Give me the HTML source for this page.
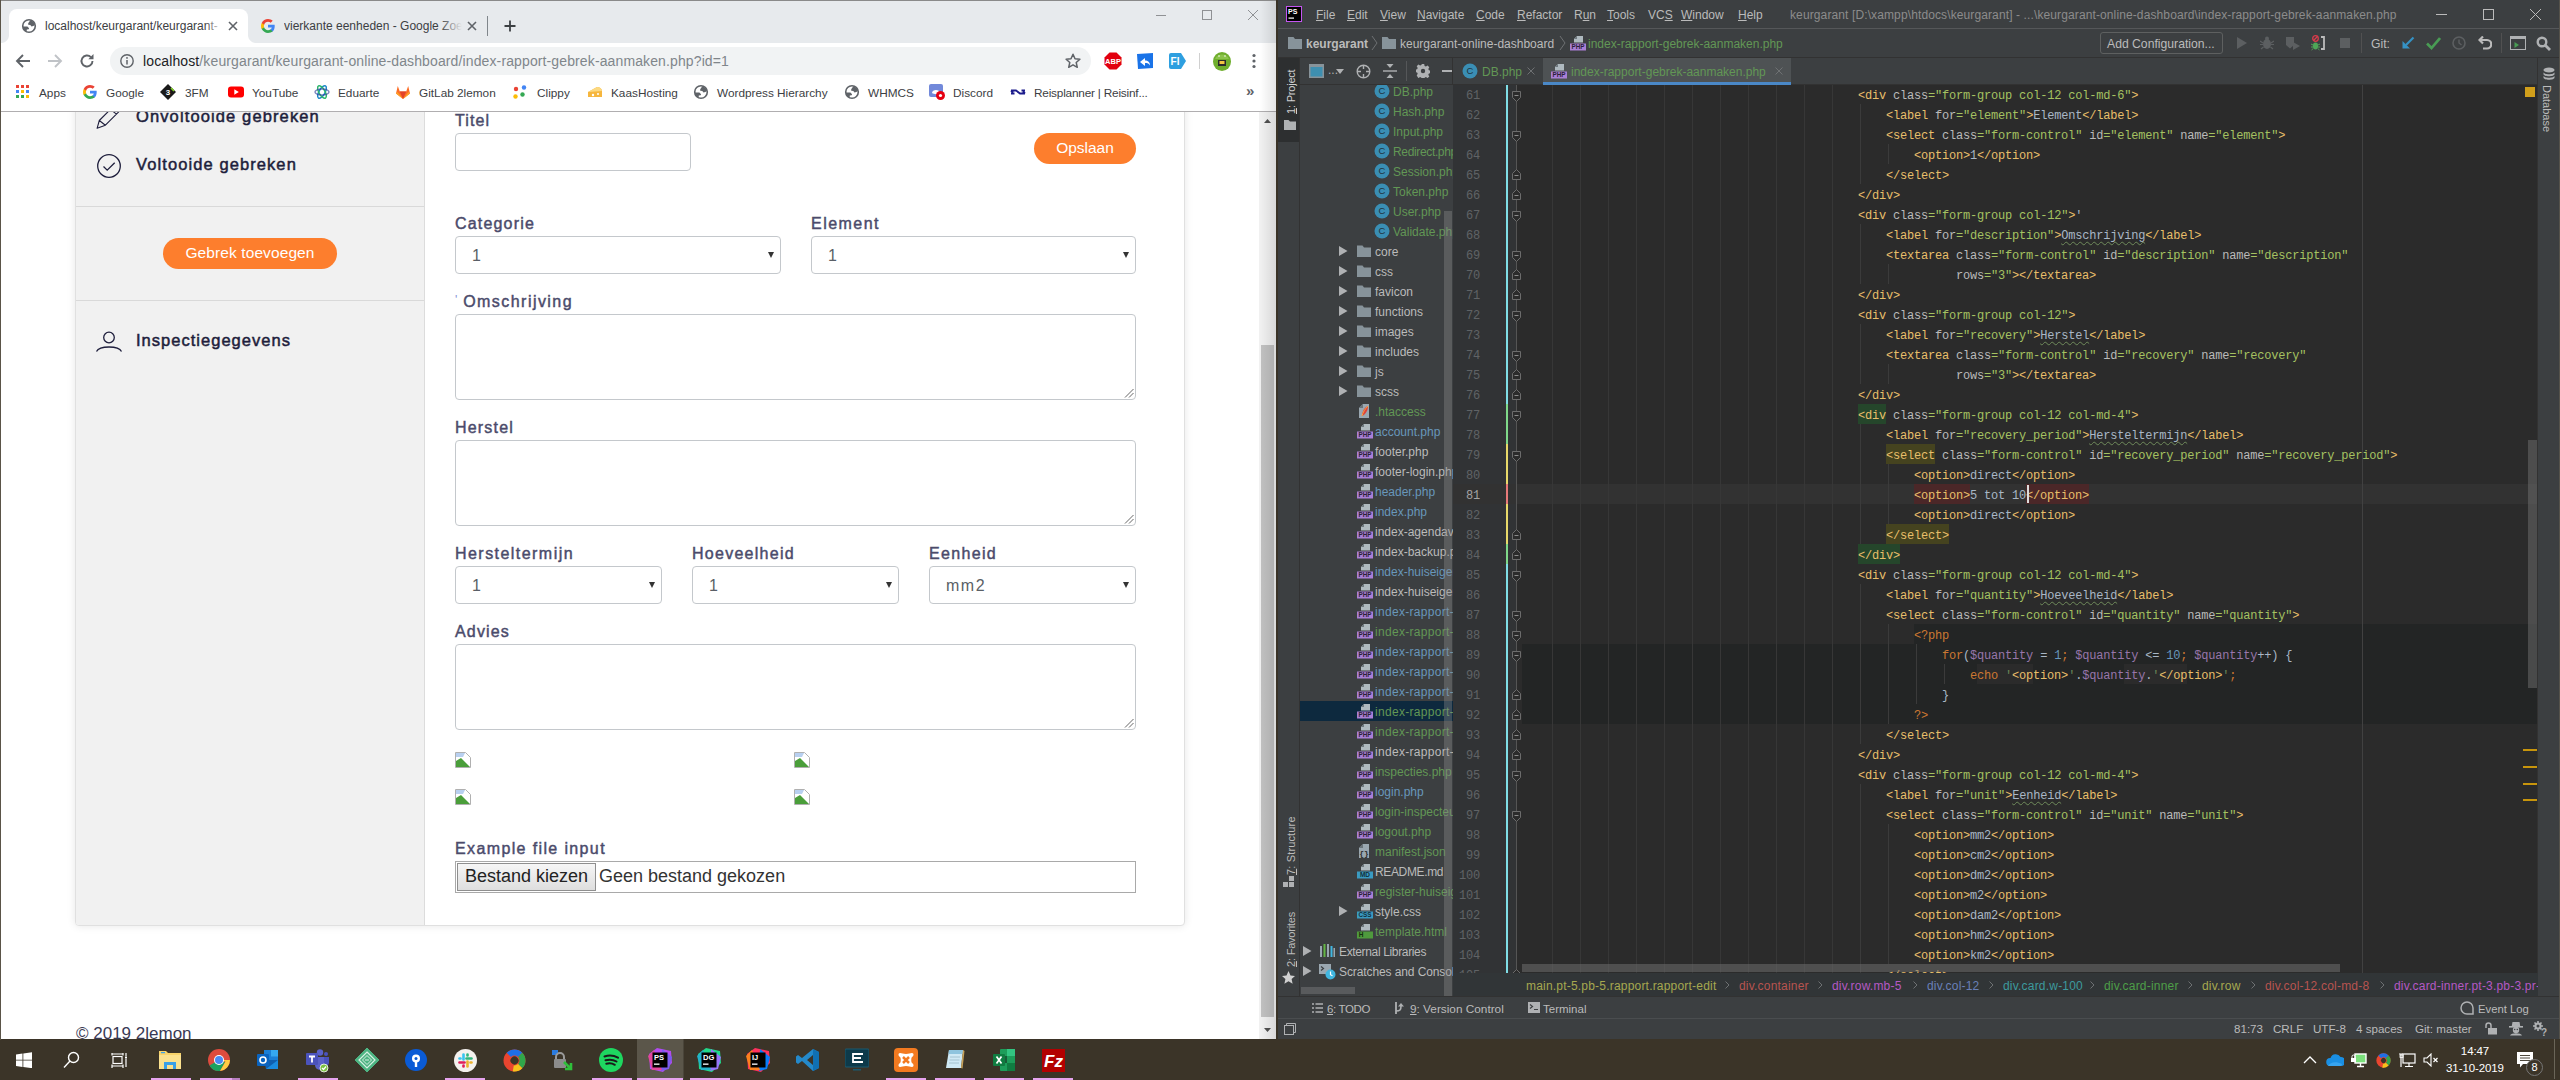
<!DOCTYPE html>
<html lang="nl">
<head>
<meta charset="utf-8">
<title>Desktop</title>
<style>
*{box-sizing:border-box;margin:0;padding:0}
html,body{width:2560px;height:1080px;overflow:hidden;background:#3a3327;font-family:"Liberation Sans",sans-serif}
.abs{position:absolute}
#chrome{position:absolute;left:0;top:0;width:1276px;height:1040px;background:#fff;overflow:hidden}
#chrome .topline{z-index:6;position:absolute;left:0;top:0;width:1277px;height:1px;background:#8a8a8a}
#chrome .leftline{z-index:6;position:absolute;left:0;top:0;width:1px;height:1040px;background:#5a5448}
#tabstrip{position:absolute;left:0;top:1px;width:1277px;height:42px;background:#e7eaed}
.tab-active{position:absolute;left:9px;top:8px;width:239px;height:34px;background:#fff;border-radius:8px 8px 0 0}
.tabtxt{position:absolute;font-size:12px;color:#3c4043;white-space:nowrap;overflow:hidden;line-height:16px}
#toolbar{position:absolute;left:0;top:43px;width:1277px;height:35px;background:#fff}
#omni{position:absolute;left:110px;top:4px;width:981px;height:28px;border-radius:14px;background:#f1f3f4}
#bookmarks{position:absolute;left:0;top:78px;width:1277px;height:34px;background:#fff;border-bottom:1px solid #b0aeb0;z-index:3}
.bm{position:absolute;top:7px;font-size:11.800px;color:#3c4043;white-space:nowrap;line-height:16px}
.bmi{position:absolute;top:6px;width:16px;height:16px}
#page{position:absolute;left:1px;top:111px;width:1258px;height:929px;background:#fff;overflow:hidden;font-family:"Liberation Sans",sans-serif}
#vscroll{position:absolute;left:1259px;top:111px;width:17px;height:929px;background:#f1f1f1}
#vscroll .thumb{position:absolute;left:2px;top:234px;width:13px;height:672px;background:#c1c1c1}
#card{position:absolute;left:74px;top:-21px;width:1110px;height:836px;background:#fff;border:1px solid #e0e0e0;box-shadow:0 0 9px rgba(0,0,0,.10);border-radius:4px}
#side{position:absolute;left:0;top:0;width:349px;height:834px;background:#f1f1f1;border-right:1px solid #dcdcdc;border-radius:0 0 0 3px}
.sideitem{position:absolute;left:60px;font-size:16.5px;color:#1e1e3c;white-space:nowrap;letter-spacing:0;-webkit-text-stroke:.5px #1e1e3c;line-height:18px}
.hr{position:absolute;left:0;width:348px;height:1px;background:#d9d9d9}
.btn{position:absolute;background:#fd7e2d;color:#fff;border-radius:16px;text-align:center;font-size:15px;white-space:nowrap}
.lbl{position:absolute;margin-top:1px;font-size:16px;color:#4b4b6b;white-space:nowrap;letter-spacing:0;line-height:18px;-webkit-text-stroke:.45px #4b4b6b}
.fc{position:absolute;border:1px solid #c4c8cc;border-radius:4px;background:#fff;height:38px}
.fc .v{position:absolute;left:16px;top:10px;font-size:16px;color:#5a5f66;line-height:18px;letter-spacing:1.500px}
.fc .arr{position:absolute;right:6px;top:15px;width:0;height:0;border-left:3.5px solid transparent;border-right:3.5px solid transparent;border-top:6px solid #333}
.ta .grip{position:absolute;right:1px;bottom:1px;width:10px;height:10px}
</style>
</head>
<body>
<div id="chrome">
<div id="tabstrip">
  <div class="tab-active"></div><div class="abs" style="left:1px;top:34px;width:8px;height:8px;background:radial-gradient(circle at 0 0,rgba(255,255,255,0) 7.500px,#fff 8.500px)"></div><div class="abs" style="left:248px;top:34px;width:8px;height:8px;background:radial-gradient(circle at 100% 0,rgba(255,255,255,0) 7.500px,#fff 8.500px)"></div>
  <svg class="abs" style="left:21px;top:17px" width="16" height="16" viewBox="0 0 16 16"><circle cx="8" cy="8" r="6.300" stroke="#5f6368" stroke-width="1.600" fill="#fff"/><path d="M9.300 2.200L7.200 5.300 7.200 6.700 9.300 6.900 10.500 8.500 12.300 8.100 14 6.900A6.300 6.300 0 0 0 9.300 2.200z" fill="#5f6368"/><path d="M1.800 8.500L6.400 8.500 8.100 10.200 7.700 11.200 5.800 11.400 5.600 13.800A6.300 6.300 0 0 1 1.800 8.500z" fill="#5f6368"/></svg>
  <div class="tabtxt" style="left:45px;top:17px;width:176px">localhost/keurgarant/keurgarant-</div>
  <div class="abs" style="left:205px;top:9px;width:18px;height:32px;background:linear-gradient(90deg,rgba(255,255,255,0),#fff)"></div>
  <svg class="abs" style="left:227px;top:19px" width="12" height="12" viewBox="0 0 12 12"><path d="M2 2l8 8M10 2l-8 8" stroke="#5f6368" stroke-width="1.600"/></svg>
  <svg class="abs" style="left:260px;top:17px" width="16" height="16" viewBox="0 0 16 16"><path d="M14.700 8.200c0-.5 0-1-.1-1.400H8v2.700h3.800c-.2.900-.7 1.600-1.400 2.100v1.800h2.300c1.300-1.200 2-3 2-5.200z" fill="#4285f4"/><path d="M8 15c1.900 0 3.500-.6 4.700-1.700l-2.300-1.800c-.6.400-1.400.7-2.400.7-1.800 0-3.400-1.200-3.900-2.900H1.700v1.800C2.900 13.500 5.300 15 8 15z" fill="#34a853"/><path d="M4.100 9.300c-.1-.4-.2-.9-.2-1.300s.1-.9.200-1.300V4.900H1.700C1.300 5.800 1 6.900 1 8s.3 2.200.7 3.100l2.400-1.800z" fill="#fbbc05"/><path d="M8 3.800c1 0 2 .4 2.700 1l2-2C11.500 1.700 9.900 1 8 1 5.300 1 2.900 2.500 1.700 4.900l2.400 1.800C4.600 5 6.200 3.800 8 3.800z" fill="#ea4335"/></svg>
  <div class="tabtxt" style="left:284px;top:17px;width:178px">vierkante eenheden - Google Zoe</div>
  <div class="abs" style="left:440px;top:9px;width:22px;height:32px;background:linear-gradient(90deg,rgba(231,234,237,0),#e7eaed)"></div>
  <svg class="abs" style="left:466px;top:19px" width="12" height="12" viewBox="0 0 12 12"><path d="M2 2l8 8M10 2l-8 8" stroke="#5f6368" stroke-width="1.600"/></svg>
  <div class="abs" style="left:487px;top:15px;width:1px;height:20px;background:#80868b"></div>
  <svg class="abs" style="left:502px;top:17px" width="16" height="16" viewBox="0 0 16 16"><path d="M8 2.500v11M2.500 8h11" stroke="#3c4043" stroke-width="1.800"/></svg>
  <svg class="abs" style="left:1155px;top:8px" width="12" height="12" viewBox="0 0 12 12"><path d="M1 6.500h10" stroke="#8f9194" stroke-width="1"/></svg>
  <svg class="abs" style="left:1201px;top:8px" width="12" height="12" viewBox="0 0 12 12"><rect x="1.500" y="1.500" width="9" height="9" stroke="#8f9194" stroke-width="1" fill="none"/></svg>
  <svg class="abs" style="left:1247px;top:8px" width="12" height="12" viewBox="0 0 12 12"><path d="M1 1l10 10M11 1L1 11" stroke="#8f9194" stroke-width="1"/></svg>
</div>
<div id="toolbar">
  <svg class="abs" style="left:14px;top:9px" width="18" height="18" viewBox="0 0 18 18"><path d="M16 9H3.500M9 3L3 9l6 6" stroke="#5f6368" stroke-width="1.900" fill="none"/></svg>
  <svg class="abs" style="left:46px;top:9px" width="18" height="18" viewBox="0 0 18 18"><path d="M2 9h12.500M9 3l6 6-6 6" stroke="#c0c3c7" stroke-width="1.900" fill="none"/></svg>
  <svg class="abs" style="left:78px;top:9px" width="18" height="18" viewBox="0 0 18 18"><path d="M14.500 9A5.500 5.500 0 1 1 12.900 5.100" stroke="#5f6368" stroke-width="1.900" fill="none"/><path d="M15.500 2v5.200h-5.200z" fill="#5f6368"/></svg>
  <div id="omni">
    <svg class="abs" style="left:9px;top:6px" width="16" height="16" viewBox="0 0 16 16"><circle cx="8" cy="8" r="6.200" stroke="#5f6368" stroke-width="1.400" fill="none"/><path d="M8 7v4.500" stroke="#5f6368" stroke-width="1.500"/><circle cx="8" cy="4.900" r=".9" fill="#5f6368"/></svg>
    <div class="abs" style="left:33px;top:5px;font-size:14px;line-height:18px;color:#80868b;white-space:nowrap;letter-spacing:.12px"><span style="color:#202124">localhost</span>/keurgarant/keurgarant-online-dashboard/index-rapport-gebrek-aanmaken.php?id=1</div>
    <svg class="abs" style="left:954px;top:5px" width="18" height="18" viewBox="0 0 18 18"><path d="M9 2.200l2 4.500 4.900.5-3.700 3.300 1.100 4.800L9 12.800l-4.300 2.500 1.100-4.800L2.100 7.200l4.900-.5z" stroke="#5f6368" stroke-width="1.500" fill="none" stroke-linejoin="round"/></svg>
  </div>
  <svg class="abs" style="left:1104px;top:9px" width="18" height="18" viewBox="0 0 18 18"><path d="M5.500 .5h7l5 5v7l-5 5h-7l-5-5v-7z" fill="#e2000f"/><text x="9" y="12" font-size="7.500" font-weight="bold" fill="#fff" text-anchor="middle" font-family="Liberation Sans,sans-serif">ABP</text></svg>
  <svg class="abs" style="left:1137px;top:10px" width="16" height="16" viewBox="0 0 16 16"><path d="M0 1l16-1v15L1 16z" fill="#1a73e8"/><path d="M3 9l5-4v2.500c3 0 5 1.500 5 5-1-2-2.500-2.500-5-2.500V13z" fill="#fff"/></svg>
  <svg class="abs" style="left:1168px;top:10px" width="18" height="16" viewBox="0 0 18 16"><path d="M1 2q0-2 2-2h10l5 8-5 8H3q-2 0-2-2z" fill="#2e9fe0"/><text x="7" y="12" font-size="10" font-weight="bold" fill="#fff" text-anchor="middle" font-family="Liberation Sans,sans-serif">FI</text></svg>
  <div class="abs" style="left:1199px;top:10px;width:1px;height:16px;background:#d0d0d0"></div>
  <svg class="abs" style="left:1212px;top:8px" width="20" height="20" viewBox="0 0 20 20"><ellipse cx="10" cy="10.500" rx="9" ry="9.500" fill="#6fae2d"/><path d="M3 8c2-6 12-6 14 0z" fill="#8bc34a"/><rect x="6" y="9" width="8" height="6" fill="#2b2b2b"/><rect x="7.500" y="10" width="5" height="3" fill="#f4c542"/><circle cx="7" cy="5" r=".8" fill="#fff"/><circle cx="13" cy="5" r=".8" fill="#fff"/></svg>
  <svg class="abs" style="left:1250px;top:9px" width="8" height="18" viewBox="0 0 8 18"><circle cx="4" cy="3.500" r="1.600" fill="#5f6368"/><circle cx="4" cy="9" r="1.600" fill="#5f6368"/><circle cx="4" cy="14.500" r="1.600" fill="#5f6368"/></svg>
</div>
<div id="bookmarks">
  <svg class="bmi" style="left:15px" viewBox="0 0 16 16"><g><rect x="1" y="1" width="3" height="3" fill="#ea4335"/><rect x="6" y="1" width="3" height="3" fill="#ea4335"/><rect x="11" y="1" width="3" height="3" fill="#ea4335"/><rect x="1" y="6" width="3" height="3" fill="#4285f4"/><rect x="6" y="6" width="3" height="3" fill="#fbbc05"/><rect x="11" y="6" width="3" height="3" fill="#4285f4"/><rect x="1" y="11" width="3" height="3" fill="#34a853"/><rect x="6" y="11" width="3" height="3" fill="#34a853"/><rect x="11" y="11" width="3" height="3" fill="#fbbc05"/></g></svg>
  <div class="bm" style="left:39px">Apps</div>
  <svg class="bmi" style="left:82px" viewBox="0 0 16 16"><path d="M14.700 8.200c0-.5 0-1-.1-1.400H8v2.700h3.800c-.2.900-.7 1.600-1.400 2.100v1.800h2.300c1.300-1.200 2-3 2-5.200z" fill="#4285f4"/><path d="M8 15c1.900 0 3.500-.6 4.700-1.700l-2.300-1.800c-.6.400-1.400.7-2.400.7-1.800 0-3.400-1.200-3.900-2.900H1.700v1.800C2.900 13.500 5.300 15 8 15z" fill="#34a853"/><path d="M4.100 9.300c-.1-.4-.2-.9-.2-1.300s.1-.9.200-1.300V4.900H1.700C1.300 5.800 1 6.900 1 8s.3 2.200.7 3.100l2.400-1.800z" fill="#fbbc05"/><path d="M8 3.800c1 0 2 .4 2.700 1l2-2C11.500 1.700 9.900 1 8 1 5.300 1 2.900 2.500 1.700 4.900l2.400 1.800C4.600 5 6.200 3.800 8 3.800z" fill="#ea4335"/></svg>
  <div class="bm" style="left:106px">Google</div>
  <svg class="bmi" style="left:160px" viewBox="0 0 16 16"><path d="M8 0l8 8-8 8-8-8z" fill="#1a1a1a"/><text x="8" y="11" font-size="8" font-weight="bold" fill="#fff" text-anchor="middle" font-family="Liberation Sans,sans-serif">3</text><path d="M11 4l3 3" stroke="#7ed321" stroke-width="1.500"/></svg>
  <div class="bm" style="left:185px">3FM</div>
  <svg class="bmi" style="left:228px" viewBox="0 0 16 16"><rect x="0" y="2.500" width="16" height="11" rx="3" fill="#f00"/><path d="M6.300 5.300l4.500 2.700-4.500 2.700z" fill="#fff"/></svg>
  <div class="bm" style="left:252px">YouTube</div>
  <svg class="bmi" style="left:314px" viewBox="0 0 16 16"><g fill="none" stroke-width="1.500"><ellipse cx="8" cy="8" rx="3" ry="7" stroke="#1e88c9" transform="rotate(30 8 8)"/><ellipse cx="8" cy="8" rx="3" ry="7" stroke="#2cb56b" transform="rotate(-30 8 8)"/><ellipse cx="8" cy="8" rx="3" ry="7" stroke="#2b3a9a" transform="rotate(90 8 8)" opacity=".6"/></g></svg>
  <div class="bm" style="left:338px">Eduarte</div>
  <svg class="bmi" style="left:395px" viewBox="0 0 16 16"><path d="M8 15L1 9.500l1.800-7.500 2 5.500h6.400l2-5.500L15 9.500z" fill="#fc6d26"/><path d="M8 15L4.800 7.500h6.400z" fill="#e24329"/><path d="M1 9.500L8 15 2.500 8z M15 9.500L8 15l5.500-7z" fill="#fca326"/></svg>
  <div class="bm" style="left:419px">GitLab 2lemon</div>
  <svg class="bmi" style="left:512px" viewBox="0 0 16 16"><circle cx="4" cy="5" r="2.200" fill="#ea4335"/><circle cx="12" cy="3.500" r="2.200" fill="#4285f4"/><circle cx="3.500" cy="12.500" r="2.200" fill="#fbbc05"/><circle cx="10.500" cy="10.500" r="2.200" fill="#34a853"/></svg>
  <div class="bm" style="left:537px">Clippy</div>
  <svg class="bmi" style="left:587px" viewBox="0 0 16 16"><path d="M1 8l9-5c3 0 5 2 5 4v6H1z" fill="#f6b63e"/><path d="M1 8l9-5c3 0 5 2 5 4z" fill="#fcd981"/><circle cx="6" cy="11" r="1.200" fill="#fff"/><circle cx="11" cy="10" r="1" fill="#fff"/></svg>
  <div class="bm" style="left:611px">KaasHosting</div>
  <svg class="bmi" style="left:693px" viewBox="0 0 16 16"><circle cx="8" cy="8" r="6.300" stroke="#5f6368" stroke-width="1.600" fill="#fff"/><path d="M9.300 2.200L7.200 5.300 7.200 6.700 9.300 6.900 10.500 8.500 12.300 8.100 14 6.900A6.300 6.300 0 0 0 9.300 2.200z" fill="#5f6368"/><path d="M1.800 8.500L6.400 8.500 8.100 10.200 7.700 11.200 5.800 11.400 5.600 13.800A6.300 6.300 0 0 1 1.800 8.500z" fill="#5f6368"/></svg>
  <div class="bm" style="left:717px">Wordpress Hierarchy</div>
  <svg class="bmi" style="left:844px" viewBox="0 0 16 16"><circle cx="8" cy="8" r="6.300" stroke="#5f6368" stroke-width="1.600" fill="#fff"/><path d="M9.300 2.200L7.200 5.300 7.200 6.700 9.300 6.900 10.500 8.500 12.300 8.100 14 6.900A6.300 6.300 0 0 0 9.300 2.200z" fill="#5f6368"/><path d="M1.800 8.500L6.400 8.500 8.100 10.200 7.700 11.200 5.800 11.400 5.600 13.800A6.300 6.300 0 0 1 1.800 8.500z" fill="#5f6368"/></svg>
  <div class="bm" style="left:868px">WHMCS</div>
  <svg class="bmi" style="left:929px" viewBox="0 0 16 16"><rect x="0" y="0" width="14" height="13" rx="2" fill="#7289da"/><path d="M3 9c0-4 8-4 8 0-2 1.500-6 1.500-8 0z" fill="#fff"/><circle cx="11.500" cy="11.500" r="4.500" fill="#e60012"/><circle cx="11.500" cy="11.500" r="1.600" fill="#fff"/></svg>
  <div class="bm" style="left:953px">Discord</div>
  <svg class="bmi" style="left:1010px" viewBox="0 0 16 16"><path d="M1 6.500h5l4 3h5M15 9.500l-2-2M1 9.500h3.500M11.500 6.500H15M1 6.500l2 2" stroke="#1c1c8c" stroke-width="1.800" fill="none"/></svg>
  <div class="bm" style="left:1034px;letter-spacing:-.2px">Reisplanner | Reisinf...</div>
  <div class="bm" style="left:1246px;font-size:15px;top:5px;font-weight:bold;color:#5f6368">»</div>
</div>
<div id="page">
 <div id="card">
  <div id="side">
    <svg class="abs" style="left:0;top:0" width="60" height="50" viewBox="0 0 60 50"><path d="M21.100 37.300L23.300 29.500 37.300 15.500 43.400 20.200 29.400 34.200zM23.300 29.500L29.400 34.200M34.400 18.400L40.500 23.100" stroke="#1e1e3c" stroke-width="1.100" fill="none" stroke-linejoin="round"/></svg>
    <div class="sideitem" id="s1" style="letter-spacing:1.12px;top:16px">Onvoltooide gebreken</div>
    <svg class="abs" style="left:20px;top:62px" width="26" height="26" viewBox="0 0 26 26"><circle cx="13" cy="13" r="11.300" stroke="#1e1e3c" stroke-width="1.300" fill="none"/><path d="M7.500 13.500l3.700 3.700 7.500-7.500" stroke="#1e1e3c" stroke-width="1.300" fill="none"/></svg>
    <div class="sideitem" id="s2" style="letter-spacing:1.09px;top:64px">Voltooide gebreken</div>
    <div class="hr" style="top:115px"></div>
    <div class="btn" id="b1" style="left:87px;top:147px;width:174px;height:31px;line-height:30px;font-size:15.5px;letter-spacing:.1px">Gebrek toevoegen</div>
    <div class="hr" style="top:209px"></div>
    <svg class="abs" style="left:19px;top:237px" width="28" height="28" viewBox="0 0 28 28"><circle cx="14" cy="9.500" r="5.300" stroke="#1e1e3c" stroke-width="1.300" fill="none"/><path d="M1.500 23.500c3-6 22-6 25 0" stroke="#1e1e3c" stroke-width="1.300" fill="none"/></svg>
    <div class="sideitem" id="s3" style="letter-spacing:1.02px;top:240px">Inspectiegegevens</div>
  </div>
  <!-- main form: card coords = X-76, Y-91 -->
  <div class="lbl" id="l1" style="letter-spacing:1.08px;left:379px;top:20px">Titel</div>
  <div class="fc" style="left:379px;top:42px;width:236px"></div>
  <div class="btn" id="b2" style="left:958px;top:42px;width:102px;height:31px;line-height:30px;font-size:15.5px">Opslaan</div>
  <div class="lbl" id="l2" style="letter-spacing:1.18px;left:379px;top:123px">Categorie</div>
  <div class="fc" style="left:379px;top:145px;width:326px"><span class="v">1</span><i class="arr"></i></div>
  <div class="lbl" id="l3" style="letter-spacing:1.47px;left:735px;top:123px">Element</div>
  <div class="fc" style="left:735px;top:145px;width:325px"><span class="v">1</span><i class="arr"></i></div>
  <div class="lbl" id="l4" style="letter-spacing:1.45px;left:379px;top:201px"><span style="-webkit-text-stroke:0;color:#8590d6;font-size:12px;letter-spacing:0;position:relative;top:-3px">'</span> Omschrijving</div>
  <div class="fc ta" style="left:379px;top:223px;width:681px;height:86px"><svg class="grip" viewBox="0 0 10 10"><path d="M1 9.500L9.500 1M5 9.500L9.500 5" stroke="#666" stroke-width="1"/></svg></div>
  <div class="lbl" id="l5" style="letter-spacing:1.19px;left:379px;top:327px">Herstel</div>
  <div class="fc ta" style="left:379px;top:349px;width:681px;height:86px"><svg class="grip" viewBox="0 0 10 10"><path d="M1 9.500L9.500 1M5 9.500L9.500 5" stroke="#666" stroke-width="1"/></svg></div>
  <div class="lbl" id="l6" style="letter-spacing:1.45px;left:379px;top:453px">Hersteltermijn</div>
  <div class="fc" style="left:379px;top:475px;width:207px"><span class="v">1</span><i class="arr"></i></div>
  <div class="lbl" id="l7" style="letter-spacing:1.27px;left:616px;top:453px">Hoeveelheid</div>
  <div class="fc" style="left:616px;top:475px;width:207px"><span class="v">1</span><i class="arr"></i></div>
  <div class="lbl" id="l8" style="letter-spacing:1.33px;left:853px;top:453px">Eenheid</div>
  <div class="fc" style="left:853px;top:475px;width:207px"><span class="v">mm2</span><i class="arr"></i></div>
  <div class="lbl" id="l9" style="letter-spacing:1.17px;left:379px;top:531px">Advies</div>
  <div class="fc ta" style="left:379px;top:553px;width:681px;height:86px"><svg class="grip" viewBox="0 0 10 10"><path d="M1 9.500L9.500 1M5 9.500L9.500 5" stroke="#666" stroke-width="1"/></svg></div>
  <svg class="abs bi" style="left:379px;top:661px" width="16" height="16" viewBox="0 0 16 16"><path d="M.5.500h10l5 5v10H.5z" fill="#fff" stroke="#b0b0b0"/><path d="M1 9l5-3 9 9H1z" fill="#4a9e3a"/><path d="M1 1h9l-2 4H1z" fill="#b8d0f0"/></svg>
  <svg class="abs bi" style="left:718px;top:661px" width="16" height="16" viewBox="0 0 16 16"><path d="M.5.500h10l5 5v10H.5z" fill="#fff" stroke="#b0b0b0"/><path d="M1 9l5-3 9 9H1z" fill="#4a9e3a"/><path d="M1 1h9l-2 4H1z" fill="#b8d0f0"/></svg>
  <svg class="abs bi" style="left:379px;top:698px" width="16" height="16" viewBox="0 0 16 16"><path d="M.5.500h10l5 5v10H.5z" fill="#fff" stroke="#b0b0b0"/><path d="M1 9l5-3 9 9H1z" fill="#4a9e3a"/><path d="M1 1h9l-2 4H1z" fill="#b8d0f0"/></svg>
  <svg class="abs bi" style="left:718px;top:698px" width="16" height="16" viewBox="0 0 16 16"><path d="M.5.500h10l5 5v10H.5z" fill="#fff" stroke="#b0b0b0"/><path d="M1 9l5-3 9 9H1z" fill="#4a9e3a"/><path d="M1 1h9l-2 4H1z" fill="#b8d0f0"/></svg>
  <div class="lbl" id="l10" style="letter-spacing:1.37px;left:379px;top:748px">Example file input</div>
  <div class="abs" style="left:379px;top:770px;width:681px;height:32px;border:1px solid #a9a9a9;background:#fff">
    <div class="abs" id="fb" style="left:1px;top:1px;width:139px;height:28px;border:1px solid #8f8f8f;background:linear-gradient(#f6f6f6,#dedede);font-size:18px;line-height:25px;text-align:center;color:#222;white-space:nowrap">Bestand kiezen</div>
    <div class="abs" id="ft" style="left:143px;top:2px;font-size:18px;line-height:25px;color:#333;white-space:nowrap">Geen bestand gekozen</div>
  </div>
 </div>
 <div class="abs" id="cp" style="left:75px;top:913px;font-size:17px;color:#3a3a55;white-space:nowrap;">© 2019 2lemon</div>
</div>
<div id="vscroll">
  <svg class="abs" style="left:5px;top:8px" width="7" height="4" viewBox="0 0 9 5"><path d="M0 5l4.500-5 4.500 5z" fill="#505050"/></svg>
  <div class="thumb"></div>
  <svg class="abs" style="left:5px;top:917px" width="7" height="4" viewBox="0 0 9 5"><path d="M0 0l4.500 5 4.500-5z" fill="#505050"/></svg>
</div>
<div class="abs" style="z-index:5;left:1260px;top:1px;width:16px;height:1039px;background:linear-gradient(90deg,rgba(0,0,0,0),rgba(0,0,0,.10))"></div>
<div class="topline"></div><div class="leftline"></div>
</div>
<style>
#ide{position:absolute;left:1278px;top:0;width:1281px;height:1040px;background:#3c3f41;overflow:hidden;color:#bbb;font-size:12px}
#ide .t{position:absolute;white-space:nowrap;line-height:16px;font-size:12px}
#ide u{text-decoration:underline;text-underline-offset:1px}
.hl{position:absolute;left:0;height:1px;width:1281px}
#editor{position:absolute;left:175px;top:85px;width:1084px;height:888px;background:#2b2b2b;overflow:hidden}
#gutter{position:absolute;left:0;top:0;width:64px;height:888px;background:#313335}
.ln{position:absolute;left:0;width:27px;text-align:right;font-family:"Liberation Mono",monospace;font-size:12px;letter-spacing:-.2px;color:#606366;line-height:20px;height:20px}
.cl{position:absolute;left:69px;white-space:pre;font-family:"Liberation Mono",monospace;font-size:12px;letter-spacing:-.2px;color:#a9b7c6;line-height:20px;height:20px}
.cl .g{color:#e8bf6a}.cl .a{color:#bababa}.cl .s{color:#a5c261}.cl .k{color:#cc7832}.cl .v{color:#9876aa}.cl .n{color:#6897bb}.cl .q{color:#6a8759}
.cl .w{text-decoration:underline wavy #6f8b5b;text-decoration-thickness:1px;text-underline-offset:2px;text-decoration-skip-ink:none}
.cl .inj{background:#2b2b2b}
.ig{position:absolute;width:1px;background:#373737}
.fm{position:absolute;left:59px;width:9px;height:11px}
#tree{position:absolute;left:22px;top:85px;width:153px;height:911px;overflow:hidden;background:#3c3f41}
.tr{position:absolute;left:0;width:200px;height:20px}
.tr .tx{position:absolute;top:3px;line-height:16px;font-size:12px;white-space:nowrap}
.tr svg{position:absolute;top:2px}
.cg{color:#629755}.cb{color:#6897bb}.cw{color:#bbbbbb}
#ide .bc{letter-spacing:.2px}
</style>
<div id="ide">
<svg class="abs" style="left:8px;top:6px" width="16" height="16" viewBox="0 0 16 16"><rect x=".5" y=".5" width="15" height="15" fill="#000" stroke="#c455f0"/><text x="2" y="8" font-size="7" font-weight="bold" fill="#fff" font-family="Liberation Sans,sans-serif">PS</text><rect x="2.500" y="11.500" width="5.500" height="1.200" fill="#fff"/></svg>
<div class="t" style="left:38px;top:7px;color:#bbbbbb;font-size:12px"><u>F</u>ile</div>
<div class="t" style="left:69px;top:7px;color:#bbbbbb;font-size:12px"><u>E</u>dit</div>
<div class="t" style="left:102px;top:7px;color:#bbbbbb;font-size:12px"><u>V</u>iew</div>
<div class="t" style="left:139px;top:7px;color:#bbbbbb;font-size:12px"><u>N</u>avigate</div>
<div class="t" style="left:198px;top:7px;color:#bbbbbb;font-size:12px"><u>C</u>ode</div>
<div class="t" style="left:239px;top:7px;color:#bbbbbb;font-size:12px"><u>R</u>efactor</div>
<div class="t" style="left:296px;top:7px;color:#bbbbbb;font-size:12px">R<u>u</u>n</div>
<div class="t" style="left:329px;top:7px;color:#bbbbbb;font-size:12px"><u>T</u>ools</div>
<div class="t" style="left:370px;top:7px;color:#bbbbbb;font-size:12px">VC<u>S</u></div>
<div class="t" style="left:403px;top:7px;color:#bbbbbb;font-size:12px"><u>W</u>indow</div>
<div class="t" style="left:460px;top:7px;color:#bbbbbb;font-size:12px"><u>H</u>elp</div>
<div class="t" id="ttl" style="left:512px;top:7px;color:#8c8c8c;font-size:12px;letter-spacing:.115px">keurgarant [D:\xampp\htdocs\keurgarant] - ...\keurgarant-online-dashboard\index-rapport-gebrek-aanmaken.php</div>
<svg class="abs" style="left:1158px;top:9px" width="11" height="11" viewBox="0 0 11 11"><path d="M0 5.500h11" stroke="#bbb"/></svg>
<svg class="abs" style="left:1205px;top:9px" width="11" height="11" viewBox="0 0 11 11"><rect x=".5" y=".5" width="10" height="10" stroke="#bbb" fill="none"/></svg>
<svg class="abs" style="left:1252px;top:9px" width="11" height="11" viewBox="0 0 11 11"><path d="M0 0l11 11M11 0L0 11" stroke="#bbb"/></svg>
<div class="hl" style="top:28px;background:#555759"></div>
<svg class="abs" style="left:9px;top:36px" width="16" height="14" viewBox="0 0 16 14"><path d="M1 1h5.500l1.500 2h7v10H1z" fill="#87939a"/></svg>
<div class="t" style="left:28px;top:36px;font-weight:bold;color:#bbb">keurgarant</div>
<svg class="abs" style="left:93px;top:35px" width="7" height="16" viewBox="0 0 7 16"><path d="M1 1l5 7-5 7" stroke="#6e7173" fill="none"/></svg>
<svg class="abs" style="left:103px;top:36px" width="16" height="14" viewBox="0 0 16 14"><path d="M1 1h5.500l1.500 2h7v10H1z" fill="#87939a"/></svg>
<div class="t" style="left:122px;top:36px;color:#bbb">keurgarant-online-dashboard</div>
<svg class="abs" style="left:281px;top:35px" width="7" height="16" viewBox="0 0 7 16"><path d="M1 1l5 7-5 7" stroke="#6e7173" fill="none"/></svg>
<svg class="abs" style="left:292px;top:35px" width="16" height="16" viewBox="0 0 16 16"><path d="M4 7.500V4l3-3h6v6.500z" fill="#aeb9bf"/><path d="M4 4h3V1z" fill="#6e787e"/><rect x="0" y="8.500" width="16" height="7" fill="#a97fd6"/><text x="8" y="14.300" font-size="6.300" font-weight="bold" font-family="Liberation Sans,sans-serif" fill="#2b2038" text-anchor="middle">PHP</text></svg>
<div class="t" style="left:310px;top:36px;color:#629755">index-rapport-gebrek-aanmaken.php</div>
<div class="abs" style="left:822px;top:32px;width:123px;height:22px;border:1px solid #5e6060;border-radius:3px"></div>
<div class="t" style="left:829px;top:36px;color:#bbb;font-size:12.200px">Add Configuration...</div>
<svg class="abs" style="left:958px;top:37px" width="12" height="12" viewBox="0 0 12 12"><path d="M1 0l10 6-10 6z" fill="#5c5f61"/></svg>
<svg class="abs" style="left:982px;top:36px" width="14" height="14" viewBox="0 0 14 14"><ellipse cx="7" cy="8" rx="4" ry="5" fill="#5c5f61"/><circle cx="7" cy="2.500" r="2" fill="#5c5f61"/><path d="M0 5l3 2M14 5l-3 2M0 8.500h3M14 8.500h-3M1 13l2.500-2M13 13l-2.500-2" stroke="#5c5f61" stroke-width="1.200"/></svg>
<svg class="abs" style="left:1007px;top:36px" width="15" height="14" viewBox="0 0 15 14"><path d="M1 1h8v8l-4 3.500-4-3.500z" fill="#5c5f61"/><path d="M8 6l7 4-7 4z" fill="#5c5f61"/></svg>
<svg class="abs" style="left:1033px;top:35px" width="15" height="16" viewBox="0 0 15 16"><circle cx="4.500" cy="3.500" r="2.800" fill="none" stroke="#db3b4b" stroke-width="1.300"/><path d="M2.500 5.500l4-4" stroke="#db3b4b" stroke-width="1.200"/><ellipse cx="4.500" cy="11" rx="2.600" ry="3.400" fill="#4fa657"/><path d="M0 9l2 1M9 9l-2 1M0 12h2M9 12h-2M.5 15l1.800-1.500M8.500 15l-1.800-1.500" stroke="#4fa657"/><path d="M10 2h3v12h-3" stroke="#bbb" stroke-width="1.800" fill="none"/></svg>
<div class="abs" style="left:1062px;top:38px;width:10px;height:10px;background:#5c5f61"></div>
<div class="abs" style="left:1083px;top:33px;width:1px;height:20px;background:#515151"></div>
<div class="t" style="left:1093px;top:36px;color:#bbb;font-size:12.200px">Git:</div>
<svg class="abs" style="left:1123px;top:36px" width="14" height="14" viewBox="0 0 14 14"><path d="M12.500 1.500L5 9" stroke="#3592c4" stroke-width="2.200" fill="none"/><path d="M1.500 12.500v-7.500l7.500 7.500z" fill="#3592c4"/></svg>
<svg class="abs" style="left:1148px;top:36px" width="15" height="14" viewBox="0 0 15 14"><path d="M1 7.500l4.500 4.500L14 2" stroke="#499c54" stroke-width="2.700" fill="none"/></svg>
<svg class="abs" style="left:1174px;top:36px" width="14" height="14" viewBox="0 0 14 14"><circle cx="7" cy="7" r="6" stroke="#5c5f61" stroke-width="1.600" fill="none"/><path d="M7 3.500V7l2.500 2" stroke="#5c5f61" stroke-width="1.400" fill="none"/></svg>
<svg class="abs" style="left:1200px;top:36px" width="14" height="14" viewBox="0 0 14 14"><path d="M5 .5L1.500 4 5 7.500M2 4H9a4 4 0 0 1 0 8.500H5" stroke="#bbb" stroke-width="2.200" fill="none"/></svg>
<div class="abs" style="left:1223px;top:33px;width:1px;height:20px;background:#515151"></div>
<svg class="abs" style="left:1232px;top:36px" width="16" height="14" viewBox="0 0 16 14"><rect x=".5" y=".5" width="15" height="13" fill="none" stroke="#afb1b3" stroke-width="1"/><rect x="0" y="0" width="16" height="3" fill="#afb1b3"/><path d="M4.500 6l4.500 3-4.500 3z" fill="#499c54"/></svg>
<svg class="abs" style="left:1258px;top:36px" width="15" height="15" viewBox="0 0 15 15"><circle cx="6" cy="6" r="4.300" stroke="#afb1b3" stroke-width="2.400" fill="none"/><path d="M9 9l5 5" stroke="#afb1b3" stroke-width="2.800"/></svg>
<div class="hl" style="top:57px;background:#323232"></div>
<div class="abs" style="left:0;top:58px;width:22px;height:938px;background:#3c3f41;border-right:1px solid #323232"></div>
<div class="abs" style="left:0;top:58px;width:21px;height:84px;background:#2d2f30"></div>
<div class="t" style="left:5px;top:114px;transform-origin:0 0;transform:rotate(-90deg);font-size:11px;letter-spacing:-.2px;color:#d0d0d0"><u>1</u>: Project</div>
<svg class="abs" style="left:6px;top:120px" width="12" height="10" viewBox="0 0 12 10"><path d="M0 0h4.500l1.500 1.500h6V10H0z" fill="#afb1b3"/></svg>
<div class="t" style="left:5px;top:875px;transform-origin:0 0;transform:rotate(-90deg);font-size:11px;letter-spacing:-.2px;color:#bbb;letter-spacing:.15px"><u>7</u>: Structure</div>
<svg class="abs" style="left:5px;top:876px" width="11" height="11" viewBox="0 0 11 11"><rect x="0" y="6" width="5" height="5" fill="#afb1b3"/><rect x="6" y="6" width="5" height="5" fill="#afb1b3"/><rect x="6" y="0" width="5" height="5" fill="#afb1b3"/></svg>
<div class="t" style="left:5px;top:967px;transform-origin:0 0;transform:rotate(-90deg);font-size:11px;letter-spacing:-.2px;color:#bbb"><u>2</u>: Favorites</div>
<svg class="abs" style="left:4px;top:971px" width="13" height="13" viewBox="0 0 13 13"><path d="M6.500 0l2 4.500 4.500.5-3.400 3 1 4.700-4.100-2.500-4.100 2.500 1-4.700L0 5l4.500-.5z" fill="#d0d0d0"/></svg>
<svg class="abs" style="left:31px;top:64px" width="15" height="14" viewBox="0 0 15 14"><rect x=".75" y=".75" width="13.500" height="12.500" fill="#3e8fb0" stroke="#87939a" stroke-width="1.500"/><rect x="0" y="0" width="15" height="3" fill="#87939a"/></svg>
<div class="t" style="left:50px;top:62px;color:#afb1b3">...</div>
<svg class="abs" style="left:58px;top:69px" width="8" height="5" viewBox="0 0 8 5"><path d="M0 0h8L4 5z" fill="#afb1b3"/></svg>
<svg class="abs" style="left:78px;top:64px" width="15" height="15" viewBox="0 0 15 15"><circle cx="7.500" cy="7.500" r="6.300" stroke="#afb1b3" stroke-width="1.400" fill="none"/><path d="M7.500 1v4M7.500 10v4M1 7.500h4M10 7.500h4" stroke="#afb1b3" stroke-width="1.400"/></svg>
<svg class="abs" style="left:105px;top:64px" width="14" height="14" viewBox="0 0 14 14"><path d="M0 7h14" stroke="#afb1b3" stroke-width="1.400"/><path d="M3.500 0h7L7 4zM3.500 14h7L7 10z" fill="#afb1b3"/></svg>
<div class="abs" style="left:128px;top:61px;width:1px;height:20px;background:#555759"></div>
<svg class="abs" style="left:138px;top:64px" width="14" height="14" viewBox="0 0 14 14"><path d="M5.800 0h2.400l.4 1.900 1.300.6L11.600 1.500l1.700 1.700-1 1.700.6 1.300 1.900.4v2.400l-1.900.4-.6 1.300 1 1.700-1.700 1.700-1.700-1-1.300.6-.4 1.900H5.800l-.4-1.900-1.300-.6-1.700 1L.7 11.400l1-1.700-.6-1.300L-.8 8V5.600l1.900-.4.6-1.300-1-1.700L2.400.5l1.700 1 1.300-.6z" fill="#afb1b3"/><circle cx="7" cy="7" r="2.200" fill="#3c3f41"/></svg>
<div class="abs" style="left:164px;top:70px;width:10px;height:2px;background:#afb1b3"></div>
<div class="abs" style="left:22px;top:84px;width:153px;height:1px;background:#323232"></div>
<div class="abs" style="left:175px;top:84px;width:1085px;height:1px;background:#323232"></div>
<div class="abs" style="left:174px;top:58px;width:1px;height:27px;background:#323232"></div>
<svg class="abs" style="left:184px;top:63px" width="16" height="16" viewBox="0 0 16 16"><circle cx="8" cy="8" r="7.500" fill="#3a8eb4"/><text x="8" y="11.400" font-size="9.500" font-family="Liberation Sans,sans-serif" fill="#1e3340" text-anchor="middle">C</text></svg>
<div class="t" style="left:204px;top:64px;color:#629755">DB.php</div>
<svg class="abs" style="left:249px;top:67px" width="8" height="8" viewBox="0 0 8 8"><path d="M.5.500l7 7M7.500.5l-7 7" stroke="#6e7173"/></svg>
<div class="abs" style="left:265px;top:58px;width:248px;height:27px;background:#4e5254"></div>
<div class="abs" style="left:265px;top:82px;width:248px;height:3px;background:#4a88c7"></div>
<svg class="abs" style="left:273px;top:63px" width="16" height="16" viewBox="0 0 16 16"><path d="M4 7.500V4l3-3h6v6.500z" fill="#aeb9bf"/><path d="M4 4h3V1z" fill="#6e787e"/><rect x="0" y="8.500" width="16" height="7" fill="#a97fd6"/><text x="8" y="14.300" font-size="6.300" font-weight="bold" font-family="Liberation Sans,sans-serif" fill="#2b2038" text-anchor="middle">PHP</text></svg>
<div class="t" style="left:293px;top:64px;color:#629755">index-rapport-gebrek-aanmaken.php</div>
<svg class="abs" style="left:497px;top:67px" width="8" height="8" viewBox="0 0 8 8"><path d="M.5.500l7 7M7.500.5l-7 7" stroke="#6e7173"/></svg>
<div class="abs" style="left:1259px;top:58px;width:23px;height:938px;background:#3c3f41;border-left:1px solid #323232"></div>
<svg class="abs" style="left:1265px;top:67px" width="12" height="14" viewBox="0 0 12 14"><ellipse cx="6" cy="3" rx="5.500" ry="2.500" fill="#afb1b3"/><path d="M.5 5c0 3 11 3 11 0v2c0 3-11 3-11 0zM.5 8.500c0 3 11 3 11 0v2c0 3-11 3-11 0z" fill="#afb1b3"/></svg>
<div class="t" style="left:1277px;top:85px;transform-origin:0 0;transform:rotate(90deg);color:#bbb;font-size:11px">Database</div>
<div id="tree">
<div class="tr" style="top:-4px">
<svg width="16" height="16" viewBox="0 0 16 16" style="left:74px"><circle cx="8" cy="8" r="7.5" fill="#3a8eb4"/><text x="8" y="11.400" font-size="9.500" font-family="Liberation Sans,sans-serif" fill="#1e3340" text-anchor="middle">C</text></svg>
<span class="tx cg" style="left:93px">DB.php</span>
</div>
<div class="tr" style="top:16px">
<svg width="16" height="16" viewBox="0 0 16 16" style="left:74px"><circle cx="8" cy="8" r="7.5" fill="#3a8eb4"/><text x="8" y="11.400" font-size="9.500" font-family="Liberation Sans,sans-serif" fill="#1e3340" text-anchor="middle">C</text></svg>
<span class="tx cg" style="left:93px">Hash.php</span>
</div>
<div class="tr" style="top:36px">
<svg width="16" height="16" viewBox="0 0 16 16" style="left:74px"><circle cx="8" cy="8" r="7.5" fill="#3a8eb4"/><text x="8" y="11.400" font-size="9.500" font-family="Liberation Sans,sans-serif" fill="#1e3340" text-anchor="middle">C</text></svg>
<span class="tx cg" style="left:93px">Input.php</span>
</div>
<div class="tr" style="top:56px">
<svg width="16" height="16" viewBox="0 0 16 16" style="left:74px"><circle cx="8" cy="8" r="7.5" fill="#3a8eb4"/><text x="8" y="11.400" font-size="9.500" font-family="Liberation Sans,sans-serif" fill="#1e3340" text-anchor="middle">C</text></svg>
<span class="tx cg" style="left:93px;letter-spacing:-.35px">Redirect.php</span>
</div>
<div class="tr" style="top:76px">
<svg width="16" height="16" viewBox="0 0 16 16" style="left:74px"><circle cx="8" cy="8" r="7.5" fill="#3a8eb4"/><text x="8" y="11.400" font-size="9.500" font-family="Liberation Sans,sans-serif" fill="#1e3340" text-anchor="middle">C</text></svg>
<span class="tx cg" style="left:93px">Session.php</span>
</div>
<div class="tr" style="top:96px">
<svg width="16" height="16" viewBox="0 0 16 16" style="left:74px"><circle cx="8" cy="8" r="7.5" fill="#3a8eb4"/><text x="8" y="11.400" font-size="9.500" font-family="Liberation Sans,sans-serif" fill="#1e3340" text-anchor="middle">C</text></svg>
<span class="tx cg" style="left:93px">Token.php</span>
</div>
<div class="tr" style="top:116px">
<svg width="16" height="16" viewBox="0 0 16 16" style="left:74px"><circle cx="8" cy="8" r="7.5" fill="#3a8eb4"/><text x="8" y="11.400" font-size="9.500" font-family="Liberation Sans,sans-serif" fill="#1e3340" text-anchor="middle">C</text></svg>
<span class="tx cg" style="left:93px">User.php</span>
</div>
<div class="tr" style="top:136px">
<svg width="16" height="16" viewBox="0 0 16 16" style="left:74px"><circle cx="8" cy="8" r="7.5" fill="#3a8eb4"/><text x="8" y="11.400" font-size="9.500" font-family="Liberation Sans,sans-serif" fill="#1e3340" text-anchor="middle">C</text></svg>
<span class="tx cg" style="left:93px">Validate.php</span>
</div>
<div class="tr" style="top:156px">
<svg width="9" height="10" viewBox="0 0 9 10" style="left:39px;top:5px"><path d="M0 0l8.500 5L0 10z" fill="#afb1b3"/></svg>
<svg width="16" height="16" viewBox="0 0 16 16" style="left:56px"><path d="M1 2.500h5.500l1.500 2h7v9.500H1z" fill="#87939a"/></svg>
<span class="tx cw" style="left:75px">core</span>
</div>
<div class="tr" style="top:176px">
<svg width="9" height="10" viewBox="0 0 9 10" style="left:39px;top:5px"><path d="M0 0l8.500 5L0 10z" fill="#afb1b3"/></svg>
<svg width="16" height="16" viewBox="0 0 16 16" style="left:56px"><path d="M1 2.500h5.500l1.500 2h7v9.500H1z" fill="#87939a"/></svg>
<span class="tx cw" style="left:75px">css</span>
</div>
<div class="tr" style="top:196px">
<svg width="9" height="10" viewBox="0 0 9 10" style="left:39px;top:5px"><path d="M0 0l8.500 5L0 10z" fill="#afb1b3"/></svg>
<svg width="16" height="16" viewBox="0 0 16 16" style="left:56px"><path d="M1 2.500h5.500l1.500 2h7v9.500H1z" fill="#87939a"/></svg>
<span class="tx cw" style="left:75px">favicon</span>
</div>
<div class="tr" style="top:216px">
<svg width="9" height="10" viewBox="0 0 9 10" style="left:39px;top:5px"><path d="M0 0l8.500 5L0 10z" fill="#afb1b3"/></svg>
<svg width="16" height="16" viewBox="0 0 16 16" style="left:56px"><path d="M1 2.500h5.500l1.500 2h7v9.500H1z" fill="#87939a"/></svg>
<span class="tx cw" style="left:75px">functions</span>
</div>
<div class="tr" style="top:236px">
<svg width="9" height="10" viewBox="0 0 9 10" style="left:39px;top:5px"><path d="M0 0l8.500 5L0 10z" fill="#afb1b3"/></svg>
<svg width="16" height="16" viewBox="0 0 16 16" style="left:56px"><path d="M1 2.500h5.500l1.500 2h7v9.500H1z" fill="#87939a"/></svg>
<span class="tx cw" style="left:75px">images</span>
</div>
<div class="tr" style="top:256px">
<svg width="9" height="10" viewBox="0 0 9 10" style="left:39px;top:5px"><path d="M0 0l8.500 5L0 10z" fill="#afb1b3"/></svg>
<svg width="16" height="16" viewBox="0 0 16 16" style="left:56px"><path d="M1 2.500h5.500l1.500 2h7v9.500H1z" fill="#87939a"/></svg>
<span class="tx cw" style="left:75px">includes</span>
</div>
<div class="tr" style="top:276px">
<svg width="9" height="10" viewBox="0 0 9 10" style="left:39px;top:5px"><path d="M0 0l8.500 5L0 10z" fill="#afb1b3"/></svg>
<svg width="16" height="16" viewBox="0 0 16 16" style="left:56px"><path d="M1 2.500h5.500l1.500 2h7v9.500H1z" fill="#87939a"/></svg>
<span class="tx cw" style="left:75px">js</span>
</div>
<div class="tr" style="top:296px">
<svg width="9" height="10" viewBox="0 0 9 10" style="left:39px;top:5px"><path d="M0 0l8.500 5L0 10z" fill="#afb1b3"/></svg>
<svg width="16" height="16" viewBox="0 0 16 16" style="left:56px"><path d="M1 2.500h5.500l1.500 2h7v9.500H1z" fill="#87939a"/></svg>
<span class="tx cw" style="left:75px">scss</span>
</div>
<div class="tr" style="top:316px">
<svg width="16" height="16" viewBox="0 0 16 16" style="left:56px"><path d="M3 15V5l4-4h6v14z" fill="#9aa7b0"/><path d="M3 5h4V1z" fill="#6a747a"/><path d="M6 13c0-5 3-9 6-10 0 4-2 8-6 10z" fill="#e0413a"/><path d="M6 13c1-4 3-7 6-10" stroke="#f9a03f" stroke-width="1" fill="none"/></svg>
<span class="tx cg" style="left:75px">.htaccess</span>
</div>
<div class="tr" style="top:336px">
<svg width="16" height="16" viewBox="0 0 16 16" style="left:57px"><path d="M4 7.500V4l3-3h6v6.500z" fill="#aeb9bf"/><path d="M4 4h3V1z" fill="#6e787e"/><rect x="0" y="8.500" width="16" height="7" fill="#a97fd6"/><text x="8" y="14.300" font-size="6.3" font-weight="bold" font-family="Liberation Sans,sans-serif" fill="#2b2038" text-anchor="middle">PHP</text></svg>
<span class="tx cb" style="left:75px">account.php</span>
</div>
<div class="tr" style="top:356px">
<svg width="16" height="16" viewBox="0 0 16 16" style="left:57px"><path d="M4 7.500V4l3-3h6v6.500z" fill="#aeb9bf"/><path d="M4 4h3V1z" fill="#6e787e"/><rect x="0" y="8.500" width="16" height="7" fill="#a97fd6"/><text x="8" y="14.300" font-size="6.3" font-weight="bold" font-family="Liberation Sans,sans-serif" fill="#2b2038" text-anchor="middle">PHP</text></svg>
<span class="tx cw" style="left:75px">footer.php</span>
</div>
<div class="tr" style="top:376px">
<svg width="16" height="16" viewBox="0 0 16 16" style="left:57px"><path d="M4 7.500V4l3-3h6v6.500z" fill="#aeb9bf"/><path d="M4 4h3V1z" fill="#6e787e"/><rect x="0" y="8.500" width="16" height="7" fill="#a97fd6"/><text x="8" y="14.300" font-size="6.3" font-weight="bold" font-family="Liberation Sans,sans-serif" fill="#2b2038" text-anchor="middle">PHP</text></svg>
<span class="tx cw" style="left:75px">footer-login.php</span>
</div>
<div class="tr" style="top:396px">
<svg width="16" height="16" viewBox="0 0 16 16" style="left:57px"><path d="M4 7.500V4l3-3h6v6.500z" fill="#aeb9bf"/><path d="M4 4h3V1z" fill="#6e787e"/><rect x="0" y="8.500" width="16" height="7" fill="#a97fd6"/><text x="8" y="14.300" font-size="6.3" font-weight="bold" font-family="Liberation Sans,sans-serif" fill="#2b2038" text-anchor="middle">PHP</text></svg>
<span class="tx cb" style="left:75px">header.php</span>
</div>
<div class="tr" style="top:416px">
<svg width="16" height="16" viewBox="0 0 16 16" style="left:57px"><path d="M4 7.500V4l3-3h6v6.500z" fill="#aeb9bf"/><path d="M4 4h3V1z" fill="#6e787e"/><rect x="0" y="8.500" width="16" height="7" fill="#a97fd6"/><text x="8" y="14.300" font-size="6.3" font-weight="bold" font-family="Liberation Sans,sans-serif" fill="#2b2038" text-anchor="middle">PHP</text></svg>
<span class="tx cb" style="left:75px">index.php</span>
</div>
<div class="tr" style="top:436px">
<svg width="16" height="16" viewBox="0 0 16 16" style="left:57px"><path d="M4 7.500V4l3-3h6v6.500z" fill="#aeb9bf"/><path d="M4 4h3V1z" fill="#6e787e"/><rect x="0" y="8.500" width="16" height="7" fill="#a97fd6"/><text x="8" y="14.300" font-size="6.3" font-weight="bold" font-family="Liberation Sans,sans-serif" fill="#2b2038" text-anchor="middle">PHP</text></svg>
<span class="tx cw" style="left:75px">index-agendaview.php</span>
</div>
<div class="tr" style="top:456px">
<svg width="16" height="16" viewBox="0 0 16 16" style="left:57px"><path d="M4 7.500V4l3-3h6v6.500z" fill="#aeb9bf"/><path d="M4 4h3V1z" fill="#6e787e"/><rect x="0" y="8.500" width="16" height="7" fill="#a97fd6"/><text x="8" y="14.300" font-size="6.3" font-weight="bold" font-family="Liberation Sans,sans-serif" fill="#2b2038" text-anchor="middle">PHP</text></svg>
<span class="tx cw" style="left:75px">index-backup.php</span>
</div>
<div class="tr" style="top:476px">
<svg width="16" height="16" viewBox="0 0 16 16" style="left:57px"><path d="M4 7.500V4l3-3h6v6.500z" fill="#aeb9bf"/><path d="M4 4h3V1z" fill="#6e787e"/><rect x="0" y="8.500" width="16" height="7" fill="#a97fd6"/><text x="8" y="14.300" font-size="6.3" font-weight="bold" font-family="Liberation Sans,sans-serif" fill="#2b2038" text-anchor="middle">PHP</text></svg>
<span class="tx cb" style="left:75px">index-huiseigenaar.php</span>
</div>
<div class="tr" style="top:496px">
<svg width="16" height="16" viewBox="0 0 16 16" style="left:57px"><path d="M4 7.500V4l3-3h6v6.500z" fill="#aeb9bf"/><path d="M4 4h3V1z" fill="#6e787e"/><rect x="0" y="8.500" width="16" height="7" fill="#a97fd6"/><text x="8" y="14.300" font-size="6.3" font-weight="bold" font-family="Liberation Sans,sans-serif" fill="#2b2038" text-anchor="middle">PHP</text></svg>
<span class="tx cw" style="left:75px">index-huiseigenaar-edit.php</span>
</div>
<div class="tr" style="top:516px">
<svg width="16" height="16" viewBox="0 0 16 16" style="left:57px"><path d="M4 7.500V4l3-3h6v6.500z" fill="#aeb9bf"/><path d="M4 4h3V1z" fill="#6e787e"/><rect x="0" y="8.500" width="16" height="7" fill="#a97fd6"/><text x="8" y="14.300" font-size="6.3" font-weight="bold" font-family="Liberation Sans,sans-serif" fill="#2b2038" text-anchor="middle">PHP</text></svg>
<span class="tx cb" style="left:75px;letter-spacing:.3px">index-rapport-aanmaken.php</span>
</div>
<div class="tr" style="top:536px">
<svg width="16" height="16" viewBox="0 0 16 16" style="left:57px"><path d="M4 7.500V4l3-3h6v6.500z" fill="#aeb9bf"/><path d="M4 4h3V1z" fill="#6e787e"/><rect x="0" y="8.500" width="16" height="7" fill="#a97fd6"/><text x="8" y="14.300" font-size="6.3" font-weight="bold" font-family="Liberation Sans,sans-serif" fill="#2b2038" text-anchor="middle">PHP</text></svg>
<span class="tx cg" style="left:75px;letter-spacing:.3px">index-rapport-bekijken.php</span>
</div>
<div class="tr" style="top:556px">
<svg width="16" height="16" viewBox="0 0 16 16" style="left:57px"><path d="M4 7.500V4l3-3h6v6.500z" fill="#aeb9bf"/><path d="M4 4h3V1z" fill="#6e787e"/><rect x="0" y="8.500" width="16" height="7" fill="#a97fd6"/><text x="8" y="14.300" font-size="6.3" font-weight="bold" font-family="Liberation Sans,sans-serif" fill="#2b2038" text-anchor="middle">PHP</text></svg>
<span class="tx cb" style="left:75px;letter-spacing:.3px">index-rapport-edit.php</span>
</div>
<div class="tr" style="top:576px">
<svg width="16" height="16" viewBox="0 0 16 16" style="left:57px"><path d="M4 7.500V4l3-3h6v6.500z" fill="#aeb9bf"/><path d="M4 4h3V1z" fill="#6e787e"/><rect x="0" y="8.500" width="16" height="7" fill="#a97fd6"/><text x="8" y="14.300" font-size="6.3" font-weight="bold" font-family="Liberation Sans,sans-serif" fill="#2b2038" text-anchor="middle">PHP</text></svg>
<span class="tx cb" style="left:75px;letter-spacing:.3px">index-rapport-gebrek.php</span>
</div>
<div class="tr" style="top:596px">
<svg width="16" height="16" viewBox="0 0 16 16" style="left:57px"><path d="M4 7.500V4l3-3h6v6.500z" fill="#aeb9bf"/><path d="M4 4h3V1z" fill="#6e787e"/><rect x="0" y="8.500" width="16" height="7" fill="#a97fd6"/><text x="8" y="14.300" font-size="6.3" font-weight="bold" font-family="Liberation Sans,sans-serif" fill="#2b2038" text-anchor="middle">PHP</text></svg>
<span class="tx cb" style="left:75px;letter-spacing:.3px">index-rapport-gebreken.php</span>
</div>
<div class="tr" style="top:616px;background:#0d293e">
<svg width="16" height="16" viewBox="0 0 16 16" style="left:57px"><path d="M4 7.500V4l3-3h6v6.500z" fill="#aeb9bf"/><path d="M4 4h3V1z" fill="#6e787e"/><rect x="0" y="8.500" width="16" height="7" fill="#a97fd6"/><text x="8" y="14.300" font-size="6.3" font-weight="bold" font-family="Liberation Sans,sans-serif" fill="#2b2038" text-anchor="middle">PHP</text></svg>
<span class="tx cg" style="left:75px;letter-spacing:.3px">index-rapport-gebrek-aanmaken.php</span>
</div>
<div class="tr" style="top:636px">
<svg width="16" height="16" viewBox="0 0 16 16" style="left:57px"><path d="M4 7.500V4l3-3h6v6.500z" fill="#aeb9bf"/><path d="M4 4h3V1z" fill="#6e787e"/><rect x="0" y="8.500" width="16" height="7" fill="#a97fd6"/><text x="8" y="14.300" font-size="6.3" font-weight="bold" font-family="Liberation Sans,sans-serif" fill="#2b2038" text-anchor="middle">PHP</text></svg>
<span class="tx cg" style="left:75px;letter-spacing:.3px">index-rapport-inspectie.php</span>
</div>
<div class="tr" style="top:656px">
<svg width="16" height="16" viewBox="0 0 16 16" style="left:57px"><path d="M4 7.500V4l3-3h6v6.500z" fill="#aeb9bf"/><path d="M4 4h3V1z" fill="#6e787e"/><rect x="0" y="8.500" width="16" height="7" fill="#a97fd6"/><text x="8" y="14.300" font-size="6.3" font-weight="bold" font-family="Liberation Sans,sans-serif" fill="#2b2038" text-anchor="middle">PHP</text></svg>
<span class="tx cw" style="left:75px;letter-spacing:.3px">index-rapport-overzicht.php</span>
</div>
<div class="tr" style="top:676px">
<svg width="16" height="16" viewBox="0 0 16 16" style="left:57px"><path d="M4 7.500V4l3-3h6v6.500z" fill="#aeb9bf"/><path d="M4 4h3V1z" fill="#6e787e"/><rect x="0" y="8.500" width="16" height="7" fill="#a97fd6"/><text x="8" y="14.300" font-size="6.3" font-weight="bold" font-family="Liberation Sans,sans-serif" fill="#2b2038" text-anchor="middle">PHP</text></svg>
<span class="tx cg" style="left:75px">inspecties.php</span>
</div>
<div class="tr" style="top:696px">
<svg width="16" height="16" viewBox="0 0 16 16" style="left:57px"><path d="M4 7.500V4l3-3h6v6.500z" fill="#aeb9bf"/><path d="M4 4h3V1z" fill="#6e787e"/><rect x="0" y="8.500" width="16" height="7" fill="#a97fd6"/><text x="8" y="14.300" font-size="6.3" font-weight="bold" font-family="Liberation Sans,sans-serif" fill="#2b2038" text-anchor="middle">PHP</text></svg>
<span class="tx cb" style="left:75px">login.php</span>
</div>
<div class="tr" style="top:716px">
<svg width="16" height="16" viewBox="0 0 16 16" style="left:57px"><path d="M4 7.500V4l3-3h6v6.500z" fill="#aeb9bf"/><path d="M4 4h3V1z" fill="#6e787e"/><rect x="0" y="8.500" width="16" height="7" fill="#a97fd6"/><text x="8" y="14.300" font-size="6.3" font-weight="bold" font-family="Liberation Sans,sans-serif" fill="#2b2038" text-anchor="middle">PHP</text></svg>
<span class="tx cg" style="left:75px">login-inspecteur.php</span>
</div>
<div class="tr" style="top:736px">
<svg width="16" height="16" viewBox="0 0 16 16" style="left:57px"><path d="M4 7.500V4l3-3h6v6.500z" fill="#aeb9bf"/><path d="M4 4h3V1z" fill="#6e787e"/><rect x="0" y="8.500" width="16" height="7" fill="#a97fd6"/><text x="8" y="14.300" font-size="6.3" font-weight="bold" font-family="Liberation Sans,sans-serif" fill="#2b2038" text-anchor="middle">PHP</text></svg>
<span class="tx cg" style="left:75px">logout.php</span>
</div>
<div class="tr" style="top:756px">
<svg width="16" height="16" viewBox="0 0 16 16" style="left:56px"><path d="M3 15V5l4-4h6v14z" fill="#9aa7b0"/><path d="M3 5h4V1z" fill="#6a747a"/><text x="8" y="13" font-size="8" font-weight="bold" font-family="Liberation Mono,monospace" fill="#2b2b2b" text-anchor="middle">{}</text></svg>
<span class="tx cg" style="left:75px">manifest.json</span>
</div>
<div class="tr" style="top:776px">
<svg width="16" height="16" viewBox="0 0 16 16" style="left:57px"><path d="M4 7.500V4l3-3h6v6.500z" fill="#aeb9bf"/><path d="M4 4h3V1z" fill="#6e787e"/><rect x="0" y="8.500" width="16" height="7" fill="#3a9ac2"/><text x="8" y="14.300" font-size="6.5" font-weight="bold" font-family="Liberation Sans,sans-serif" fill="#12303c" text-anchor="middle">MD</text></svg>
<span class="tx cw" style="left:75px;letter-spacing:-.35px">README.md</span>
</div>
<div class="tr" style="top:796px">
<svg width="16" height="16" viewBox="0 0 16 16" style="left:57px"><path d="M4 7.500V4l3-3h6v6.500z" fill="#aeb9bf"/><path d="M4 4h3V1z" fill="#6e787e"/><rect x="0" y="8.500" width="16" height="7" fill="#a97fd6"/><text x="8" y="14.300" font-size="6.3" font-weight="bold" font-family="Liberation Sans,sans-serif" fill="#2b2038" text-anchor="middle">PHP</text></svg>
<span class="tx cg" style="left:75px">register-huiseigenaar.php</span>
</div>
<div class="tr" style="top:816px">
<svg width="9" height="10" viewBox="0 0 9 10" style="left:39px;top:5px"><path d="M0 0l8.500 5L0 10z" fill="#afb1b3"/></svg>
<svg width="16" height="16" viewBox="0 0 16 16" style="left:57px"><path d="M4 7.500V4l3-3h6v6.500z" fill="#aeb9bf"/><path d="M4 4h3V1z" fill="#6e787e"/><rect x="0" y="8.500" width="16" height="7" fill="#3a9ac2"/><text x="8" y="14.300" font-size="6.3" font-weight="bold" font-family="Liberation Sans,sans-serif" fill="#12303c" text-anchor="middle">CSS</text></svg>
<span class="tx cw" style="left:75px">style.css</span>
</div>
<div class="tr" style="top:836px">
<svg width="16" height="16" viewBox="0 0 16 16" style="left:57px"><path d="M4 7.500V4l3-3h6v6.500z" fill="#aeb9bf"/><path d="M4 4h3V1z" fill="#6e787e"/><rect x="0" y="8.500" width="16" height="7" fill="#4f9a3d"/><text x="4" y="14.300" font-size="6.500" font-weight="bold" font-family="Liberation Sans,sans-serif" fill="#14300f" text-anchor="middle">H</text></svg>
<span class="tx cg" style="left:75px">template.html</span>
</div>
<div class="tr" style="top:856px">
<svg width="9" height="10" viewBox="0 0 9 10" style="left:3px;top:5px"><path d="M0 0l8.500 5L0 10z" fill="#afb1b3"/></svg>
<svg width="16" height="16" viewBox="0 0 16 16" style="left:19px"><rect x="1" y="3" width="2" height="11" fill="#9aa7b0"/><rect x="4.500" y="1" width="2" height="13" fill="#62b543"/><rect x="8" y="1" width="2" height="13" fill="#9aa7b0"/><rect x="11.500" y="3" width="2" height="11" fill="#40b6e0"/><rect x="14.500" y="5" width="1.500" height="9" fill="#9aa7b0"/></svg>
<span class="tx cw" style="left:39px;letter-spacing:-.35px">External Libraries</span>
</div>
<div class="tr" style="top:876px">
<svg width="9" height="10" viewBox="0 0 9 10" style="left:3px;top:5px"><path d="M0 0l8.500 5L0 10z" fill="#afb1b3"/></svg>
<svg width="17" height="17" viewBox="0 0 17 17" style="left:19px"><rect x="0" y="1" width="12" height="10" fill="#9aa7b0"/><path d="M2 3.500l2.500 2-2.500 2" stroke="#3c3f41" stroke-width="1.200" fill="none"/><circle cx="11.500" cy="11.500" r="5" fill="#40b6e0"/><path d="M11.500 8.500v3.200l2 1" stroke="#fff" stroke-width="1.200" fill="none"/></svg>
<span class="tx cw" style="left:39px;letter-spacing:-.1px">Scratches and Consoles</span>
</div>
<div class="abs" style="left:144px;top:126px;width:8px;height:785px;background:rgba(140,140,140,.38)"></div>
<div class="abs" style="left:0;top:902px;width:144px;height:9px;background:#3c3f41"></div>
<div class="abs" style="left:1px;top:902px;width:54px;height:7px;background:#595b5d"></div>
</div>
<div id="editor">
<div class="abs" style="left:0;top:399px;width:1085px;height:20px;background:#323232"></div>
<div class="abs" style="left:69px;top:559px;width:1016px;height:80px;background:#232525"></div>
<div class="abs" style="left:461px;top:539px;width:700px;height:20px;background:#232525"></div>
<div class="abs" style="left:69px;top:619px;width:407px;height:20px;background:#232525"></div>
<div class="abs" style="left:405px;top:319px;width:28px;height:20px;background:#25462b"></div>
<div class="abs" style="left:405px;top:459px;width:42px;height:20px;background:#25462b"></div>
<div class="abs" style="left:433px;top:359px;width:49px;height:20px;background:#45431f"></div>
<div class="abs" style="left:433px;top:439px;width:63px;height:20px;background:#45431f"></div>
<div class="abs" style="left:461px;top:399px;width:56px;height:20px;background:#4b2728"></div>
<div class="abs" style="left:573px;top:399px;width:63px;height:20px;background:#4b2728"></div>
<div class="abs" style="left:524px;top:579px;width:56px;height:20px;background:#2b2b2b"></div>
<div class="abs" style="left:671px;top:579px;width:63px;height:20px;background:#2b2b2b"></div>
<div id="gutter"></div>
<div class="abs" style="left:0;top:399px;width:64px;height:20px;background:#323232"></div>
<div class="ig" style="left:99px;top:0;height:888px"></div>
<div class="ig" style="left:127px;top:0;height:888px"></div>
<div class="ig" style="left:155px;top:0;height:888px"></div>
<div class="ig" style="left:183px;top:0;height:888px"></div>
<div class="ig" style="left:211px;top:0;height:888px"></div>
<div class="ig" style="left:239px;top:0;height:888px"></div>
<div class="ig" style="left:267px;top:0;height:888px"></div>
<div class="ig" style="left:295px;top:0;height:888px"></div>
<div class="ig" style="left:323px;top:0;height:888px"></div>
<div class="ig" style="left:351px;top:0;height:888px"></div>
<div class="ig" style="left:379px;top:0;height:888px"></div>
<div class="ig" style="left:407px;top:19px;height:80px;background:#3b3b3b"></div>
<div class="ig" style="left:407px;top:139px;height:60px;background:#3b3b3b"></div>
<div class="ig" style="left:407px;top:239px;height:60px;background:#3b3b3b"></div>
<div class="ig" style="left:407px;top:339px;height:120px;background:#3b3b3b"></div>
<div class="ig" style="left:407px;top:499px;height:160px;background:#3b3b3b"></div>
<div class="ig" style="left:407px;top:699px;height:200px;background:#3b3b3b"></div>
<div class="ig" style="left:435px;top:59px;height:20px;background:#3b3b3b"></div>
<div class="ig" style="left:435px;top:179px;height:20px;background:#3b3b3b"></div>
<div class="ig" style="left:435px;top:279px;height:20px;background:#3b3b3b"></div>
<div class="ig" style="left:435px;top:379px;height:60px;background:#3b3b3b"></div>
<div class="ig" style="left:435px;top:539px;height:100px;background:#3b3b3b"></div>
<div class="ig" style="left:435px;top:739px;height:140px;background:#3b3b3b"></div>
<div class="ig" style="left:463px;top:559px;height:60px;background:#3b3b3b"></div>
<div class="ig" style="left:491px;top:579px;height:20px;background:#3b3b3b"></div>
<div class="abs" style="left:909px;top:0;width:1px;height:888px;background:#414141"></div>
<div class="ln" style="top:1px">61</div>
<div class="cl" style="top:1px">                                                <span class="g">&lt;div</span> <span class="a">class</span><span class="s">=&quot;form-group col-12 col-md-6&quot;</span><span class="g">&gt;</span></div>
<div class="ln" style="top:21px">62</div>
<div class="cl" style="top:21px">                                                    <span class="g">&lt;label</span> <span class="a">for</span><span class="s">=&quot;element&quot;</span><span class="g">&gt;</span>Element<span class="g">&lt;/label&gt;</span></div>
<div class="ln" style="top:41px">63</div>
<div class="cl" style="top:41px">                                                    <span class="g">&lt;select</span> <span class="a">class</span><span class="s">=&quot;form-control&quot;</span> <span class="a">id</span><span class="s">=&quot;element&quot;</span> <span class="a">name</span><span class="s">=&quot;element&quot;</span><span class="g">&gt;</span></div>
<div class="ln" style="top:61px">64</div>
<div class="cl" style="top:61px">                                                        <span class="g">&lt;option&gt;</span>1<span class="g">&lt;/option&gt;</span></div>
<div class="ln" style="top:81px">65</div>
<div class="cl" style="top:81px">                                                    <span class="g">&lt;/select&gt;</span></div>
<div class="ln" style="top:101px">66</div>
<div class="cl" style="top:101px">                                                <span class="g">&lt;/div&gt;</span></div>
<div class="ln" style="top:121px">67</div>
<div class="cl" style="top:121px">                                                <span class="g">&lt;div</span> <span class="a">class</span><span class="s">=&quot;form-group col-12&quot;</span><span class="g">&gt;</span>&#x27;</div>
<div class="ln" style="top:141px">68</div>
<div class="cl" style="top:141px">                                                    <span class="g">&lt;label</span> <span class="a">for</span><span class="s">=&quot;description&quot;</span><span class="g">&gt;</span><span class="w">Omschrijving</span><span class="g">&lt;/label&gt;</span></div>
<div class="ln" style="top:161px">69</div>
<div class="cl" style="top:161px">                                                    <span class="g">&lt;textarea</span> <span class="a">class</span><span class="s">=&quot;form-control&quot;</span> <span class="a">id</span><span class="s">=&quot;description&quot;</span> <span class="a">name</span><span class="s">=&quot;description&quot;</span><span class="g"></span></div>
<div class="ln" style="top:181px">70</div>
<div class="cl" style="top:181px">                                                              <span class="a">rows</span><span class="s">=&quot;3&quot;</span><span class="g">&gt;&lt;/textarea&gt;</span></div>
<div class="ln" style="top:201px">71</div>
<div class="cl" style="top:201px">                                                <span class="g">&lt;/div&gt;</span></div>
<div class="ln" style="top:221px">72</div>
<div class="cl" style="top:221px">                                                <span class="g">&lt;div</span> <span class="a">class</span><span class="s">=&quot;form-group col-12&quot;</span><span class="g">&gt;</span></div>
<div class="ln" style="top:241px">73</div>
<div class="cl" style="top:241px">                                                    <span class="g">&lt;label</span> <span class="a">for</span><span class="s">=&quot;recovery&quot;</span><span class="g">&gt;</span><span class="w">Herstel</span><span class="g">&lt;/label&gt;</span></div>
<div class="ln" style="top:261px">74</div>
<div class="cl" style="top:261px">                                                    <span class="g">&lt;textarea</span> <span class="a">class</span><span class="s">=&quot;form-control&quot;</span> <span class="a">id</span><span class="s">=&quot;recovery&quot;</span> <span class="a">name</span><span class="s">=&quot;recovery&quot;</span><span class="g"></span></div>
<div class="ln" style="top:281px">75</div>
<div class="cl" style="top:281px">                                                              <span class="a">rows</span><span class="s">=&quot;3&quot;</span><span class="g">&gt;&lt;/textarea&gt;</span></div>
<div class="ln" style="top:301px">76</div>
<div class="cl" style="top:301px">                                                <span class="g">&lt;/div&gt;</span></div>
<div class="ln" style="top:321px">77</div>
<div class="cl" style="top:321px">                                                <span class="g">&lt;div</span> <span class="a">class</span><span class="s">=&quot;form-group col-12 col-md-4&quot;</span><span class="g">&gt;</span></div>
<div class="ln" style="top:341px">78</div>
<div class="cl" style="top:341px">                                                    <span class="g">&lt;label</span> <span class="a">for</span><span class="s">=&quot;recovery_period&quot;</span><span class="g">&gt;</span><span class="w">Hersteltermijn</span><span class="g">&lt;/label&gt;</span></div>
<div class="ln" style="top:361px">79</div>
<div class="cl" style="top:361px">                                                    <span class="g">&lt;select</span> <span class="a">class</span><span class="s">=&quot;form-control&quot;</span> <span class="a">id</span><span class="s">=&quot;recovery_period&quot;</span> <span class="a">name</span><span class="s">=&quot;recovery_period&quot;</span><span class="g">&gt;</span></div>
<div class="ln" style="top:381px">80</div>
<div class="cl" style="top:381px">                                                        <span class="g">&lt;option&gt;</span>direct<span class="g">&lt;/option&gt;</span></div>
<div class="ln" style="top:401px;color:#a4a3a3">81</div>
<div class="cl" style="top:401px">                                                        <span class="g">&lt;option&gt;</span>5 tot 10<span class="g">&lt;/option&gt;</span></div>
<div class="ln" style="top:421px">82</div>
<div class="cl" style="top:421px">                                                        <span class="g">&lt;option&gt;</span>direct<span class="g">&lt;/option&gt;</span></div>
<div class="ln" style="top:441px">83</div>
<div class="cl" style="top:441px">                                                    <span class="g">&lt;/select&gt;</span></div>
<div class="ln" style="top:461px">84</div>
<div class="cl" style="top:461px">                                                <span class="g">&lt;/div&gt;</span></div>
<div class="ln" style="top:481px">85</div>
<div class="cl" style="top:481px">                                                <span class="g">&lt;div</span> <span class="a">class</span><span class="s">=&quot;form-group col-12 col-md-4&quot;</span><span class="g">&gt;</span></div>
<div class="ln" style="top:501px">86</div>
<div class="cl" style="top:501px">                                                    <span class="g">&lt;label</span> <span class="a">for</span><span class="s">=&quot;quantity&quot;</span><span class="g">&gt;</span><span class="w">Hoeveelheid</span><span class="g">&lt;/label&gt;</span></div>
<div class="ln" style="top:521px">87</div>
<div class="cl" style="top:521px">                                                    <span class="g">&lt;select</span> <span class="a">class</span><span class="s">=&quot;form-control&quot;</span> <span class="a">id</span><span class="s">=&quot;quantity&quot;</span> <span class="a">name</span><span class="s">=&quot;quantity&quot;</span><span class="g">&gt;</span></div>
<div class="ln" style="top:541px">88</div>
<div class="cl" style="top:541px">                                                        <span class="k">&lt;?php</span></div>
<div class="ln" style="top:561px">89</div>
<div class="cl" style="top:561px">                                                            <span class="k">for</span>(<span class="v">$quantity</span> = <span class="n">1</span><span class="k">;</span> <span class="v">$quantity</span> &lt;= <span class="n">10</span><span class="k">;</span> <span class="v">$quantity</span>++) {</div>
<div class="ln" style="top:581px">90</div>
<div class="cl" style="top:581px">                                                                <span class="k">echo </span><span class="q">&#x27;</span><span class="g">&lt;option&gt;</span><span class="q">&#x27;</span>.<span class="v">$quantity</span>.<span class="q">&#x27;</span><span class="g">&lt;/option&gt;</span><span class="q">&#x27;</span><span class="k">;</span></div>
<div class="ln" style="top:601px">91</div>
<div class="cl" style="top:601px">                                                            }</div>
<div class="ln" style="top:621px">92</div>
<div class="cl" style="top:621px">                                                        <span class="k">?&gt;</span></div>
<div class="ln" style="top:641px">93</div>
<div class="cl" style="top:641px">                                                    <span class="g">&lt;/select&gt;</span></div>
<div class="ln" style="top:661px">94</div>
<div class="cl" style="top:661px">                                                <span class="g">&lt;/div&gt;</span></div>
<div class="ln" style="top:681px">95</div>
<div class="cl" style="top:681px">                                                <span class="g">&lt;div</span> <span class="a">class</span><span class="s">=&quot;form-group col-12 col-md-4&quot;</span><span class="g">&gt;</span></div>
<div class="ln" style="top:701px">96</div>
<div class="cl" style="top:701px">                                                    <span class="g">&lt;label</span> <span class="a">for</span><span class="s">=&quot;unit&quot;</span><span class="g">&gt;</span><span class="w">Eenheid</span><span class="g">&lt;/label&gt;</span></div>
<div class="ln" style="top:721px">97</div>
<div class="cl" style="top:721px">                                                    <span class="g">&lt;select</span> <span class="a">class</span><span class="s">=&quot;form-control&quot;</span> <span class="a">id</span><span class="s">=&quot;unit&quot;</span> <span class="a">name</span><span class="s">=&quot;unit&quot;</span><span class="g">&gt;</span></div>
<div class="ln" style="top:741px">98</div>
<div class="cl" style="top:741px">                                                        <span class="g">&lt;option&gt;</span>mm2<span class="g">&lt;/option&gt;</span></div>
<div class="ln" style="top:761px">99</div>
<div class="cl" style="top:761px">                                                        <span class="g">&lt;option&gt;</span>cm2<span class="g">&lt;/option&gt;</span></div>
<div class="ln" style="top:781px">100</div>
<div class="cl" style="top:781px">                                                        <span class="g">&lt;option&gt;</span>dm2<span class="g">&lt;/option&gt;</span></div>
<div class="ln" style="top:801px">101</div>
<div class="cl" style="top:801px">                                                        <span class="g">&lt;option&gt;</span>m2<span class="g">&lt;/option&gt;</span></div>
<div class="ln" style="top:821px">102</div>
<div class="cl" style="top:821px">                                                        <span class="g">&lt;option&gt;</span>dam2<span class="g">&lt;/option&gt;</span></div>
<div class="ln" style="top:841px">103</div>
<div class="cl" style="top:841px">                                                        <span class="g">&lt;option&gt;</span>hm2<span class="g">&lt;/option&gt;</span></div>
<div class="ln" style="top:861px">104</div>
<div class="cl" style="top:861px">                                                        <span class="g">&lt;option&gt;</span>km2<span class="g">&lt;/option&gt;</span></div>
<div class="ln" style="top:881px">105</div>
<div class="cl" style="top:881px">                                                    <span class="g">&lt;/select&gt;</span></div>
<div class="abs" style="left:574px;top:400px;width:2px;height:18px;background:#ddd"></div>
<div class="abs" style="left:53px;top:0;width:2px;height:888px;background:#7fdde6"></div>
<div class="abs" style="left:53px;top:319px;width:2px;height:40px;background:#7fd98a"></div>
<div class="abs" style="left:53px;top:359px;width:2px;height:40px;background:#e8d96a"></div>
<div class="abs" style="left:53px;top:399px;width:2px;height:20px;background:#e87a7a"></div>
<div class="abs" style="left:53px;top:419px;width:2px;height:40px;background:#e8d96a"></div>
<div class="abs" style="left:53px;top:459px;width:2px;height:20px;background:#7fd98a"></div>
<div class="abs" style="left:63px;top:0;width:1px;height:888px;background:#555"></div>
<svg class="fm" style="top:6px" viewBox="0 0 9 11"><path d="M.5.500h8v6l-4 4-4-4z" fill="#2b2b2b" stroke="#6c6c6c"/><path d="M2.500 4.500h4" stroke="#8a8a8a"/></svg>
<svg class="fm" style="top:46px" viewBox="0 0 9 11"><path d="M.5.500h8v6l-4 4-4-4z" fill="#2b2b2b" stroke="#6c6c6c"/><path d="M2.500 4.500h4" stroke="#8a8a8a"/></svg>
<svg class="fm" style="top:126px" viewBox="0 0 9 11"><path d="M.5.500h8v6l-4 4-4-4z" fill="#2b2b2b" stroke="#6c6c6c"/><path d="M2.500 4.500h4" stroke="#8a8a8a"/></svg>
<svg class="fm" style="top:166px" viewBox="0 0 9 11"><path d="M.5.500h8v6l-4 4-4-4z" fill="#2b2b2b" stroke="#6c6c6c"/><path d="M2.500 4.500h4" stroke="#8a8a8a"/></svg>
<svg class="fm" style="top:226px" viewBox="0 0 9 11"><path d="M.5.500h8v6l-4 4-4-4z" fill="#2b2b2b" stroke="#6c6c6c"/><path d="M2.500 4.500h4" stroke="#8a8a8a"/></svg>
<svg class="fm" style="top:266px" viewBox="0 0 9 11"><path d="M.5.500h8v6l-4 4-4-4z" fill="#2b2b2b" stroke="#6c6c6c"/><path d="M2.500 4.500h4" stroke="#8a8a8a"/></svg>
<svg class="fm" style="top:326px" viewBox="0 0 9 11"><path d="M.5.500h8v6l-4 4-4-4z" fill="#2b2b2b" stroke="#6c6c6c"/><path d="M2.500 4.500h4" stroke="#8a8a8a"/></svg>
<svg class="fm" style="top:366px" viewBox="0 0 9 11"><path d="M.5.500h8v6l-4 4-4-4z" fill="#2b2b2b" stroke="#6c6c6c"/><path d="M2.500 4.500h4" stroke="#8a8a8a"/></svg>
<svg class="fm" style="top:486px" viewBox="0 0 9 11"><path d="M.5.500h8v6l-4 4-4-4z" fill="#2b2b2b" stroke="#6c6c6c"/><path d="M2.500 4.500h4" stroke="#8a8a8a"/></svg>
<svg class="fm" style="top:526px" viewBox="0 0 9 11"><path d="M.5.500h8v6l-4 4-4-4z" fill="#2b2b2b" stroke="#6c6c6c"/><path d="M2.500 4.500h4" stroke="#8a8a8a"/></svg>
<svg class="fm" style="top:546px" viewBox="0 0 9 11"><path d="M.5.500h8v6l-4 4-4-4z" fill="#2b2b2b" stroke="#6c6c6c"/><path d="M2.500 4.500h4" stroke="#8a8a8a"/></svg>
<svg class="fm" style="top:566px" viewBox="0 0 9 11"><path d="M.5.500h8v6l-4 4-4-4z" fill="#2b2b2b" stroke="#6c6c6c"/><path d="M2.500 4.500h4" stroke="#8a8a8a"/></svg>
<svg class="fm" style="top:686px" viewBox="0 0 9 11"><path d="M.5.500h8v6l-4 4-4-4z" fill="#2b2b2b" stroke="#6c6c6c"/><path d="M2.500 4.500h4" stroke="#8a8a8a"/></svg>
<svg class="fm" style="top:726px" viewBox="0 0 9 11"><path d="M.5.500h8v6l-4 4-4-4z" fill="#2b2b2b" stroke="#6c6c6c"/><path d="M2.500 4.500h4" stroke="#8a8a8a"/></svg>
<svg class="fm" style="top:84px" viewBox="0 0 9 11"><path d="M.5 10.500h8v-6l-4-4-4 4z" fill="#2b2b2b" stroke="#6c6c6c"/><path d="M2.500 6.500h4" stroke="#8a8a8a"/></svg>
<svg class="fm" style="top:104px" viewBox="0 0 9 11"><path d="M.5 10.500h8v-6l-4-4-4 4z" fill="#2b2b2b" stroke="#6c6c6c"/><path d="M2.500 6.500h4" stroke="#8a8a8a"/></svg>
<svg class="fm" style="top:184px" viewBox="0 0 9 11"><path d="M.5 10.500h8v-6l-4-4-4 4z" fill="#2b2b2b" stroke="#6c6c6c"/><path d="M2.500 6.500h4" stroke="#8a8a8a"/></svg>
<svg class="fm" style="top:204px" viewBox="0 0 9 11"><path d="M.5 10.500h8v-6l-4-4-4 4z" fill="#2b2b2b" stroke="#6c6c6c"/><path d="M2.500 6.500h4" stroke="#8a8a8a"/></svg>
<svg class="fm" style="top:284px" viewBox="0 0 9 11"><path d="M.5 10.500h8v-6l-4-4-4 4z" fill="#2b2b2b" stroke="#6c6c6c"/><path d="M2.500 6.500h4" stroke="#8a8a8a"/></svg>
<svg class="fm" style="top:304px" viewBox="0 0 9 11"><path d="M.5 10.500h8v-6l-4-4-4 4z" fill="#2b2b2b" stroke="#6c6c6c"/><path d="M2.500 6.500h4" stroke="#8a8a8a"/></svg>
<svg class="fm" style="top:444px" viewBox="0 0 9 11"><path d="M.5 10.500h8v-6l-4-4-4 4z" fill="#2b2b2b" stroke="#6c6c6c"/><path d="M2.500 6.500h4" stroke="#8a8a8a"/></svg>
<svg class="fm" style="top:464px" viewBox="0 0 9 11"><path d="M.5 10.500h8v-6l-4-4-4 4z" fill="#2b2b2b" stroke="#6c6c6c"/><path d="M2.500 6.500h4" stroke="#8a8a8a"/></svg>
<svg class="fm" style="top:604px" viewBox="0 0 9 11"><path d="M.5 10.500h8v-6l-4-4-4 4z" fill="#2b2b2b" stroke="#6c6c6c"/><path d="M2.500 6.500h4" stroke="#8a8a8a"/></svg>
<svg class="fm" style="top:624px" viewBox="0 0 9 11"><path d="M.5 10.500h8v-6l-4-4-4 4z" fill="#2b2b2b" stroke="#6c6c6c"/><path d="M2.500 6.500h4" stroke="#8a8a8a"/></svg>
<svg class="fm" style="top:644px" viewBox="0 0 9 11"><path d="M.5 10.500h8v-6l-4-4-4 4z" fill="#2b2b2b" stroke="#6c6c6c"/><path d="M2.500 6.500h4" stroke="#8a8a8a"/></svg>
<svg class="fm" style="top:664px" viewBox="0 0 9 11"><path d="M.5 10.500h8v-6l-4-4-4 4z" fill="#2b2b2b" stroke="#6c6c6c"/><path d="M2.500 6.500h4" stroke="#8a8a8a"/></svg>
<svg class="fm" style="top:884px" viewBox="0 0 9 11"><path d="M.5 10.500h8v-6l-4-4-4 4z" fill="#2b2b2b" stroke="#6c6c6c"/><path d="M2.500 6.500h4" stroke="#8a8a8a"/></svg>
<div class="abs" style="left:69px;top:879px;width:818px;height:8px;background:rgba(110,110,110,.55)"></div>
<div class="abs" style="left:1075px;top:355px;width:9px;height:248px;background:rgba(120,120,120,.45)"></div>
<div class="abs" style="left:1072px;top:2px;width:10px;height:10px;background:#d19f1b"></div>
<div class="abs" style="left:1070px;top:664px;width:15px;height:2px;background:#c8950c"></div>
<div class="abs" style="left:1070px;top:681px;width:15px;height:2px;background:#c8950c"></div>
<div class="abs" style="left:1070px;top:698px;width:15px;height:2px;background:#c8950c"></div>
<div class="abs" style="left:1070px;top:714px;width:15px;height:2px;background:#c8950c"></div>
</div>
<div class="abs" style="left:175px;top:973px;width:1085px;height:23px;background:#313537"></div>
<div class="abs" style="left:175px;top:973px;width:1085px;height:23px;overflow:hidden">
<div class="t bc" style="left:73px;top:5px;color:#a6a84f">main.pt-5.pb-5.rapport.rapport-edit</div>
<svg class="abs" style="left:272px;top:8px" width="5" height="8" viewBox="0 0 5 8"><path d="M.5.500l3.500 3.500-3.500 3.500" stroke="#6e7173" fill="none"/></svg>
<div class="t bc" style="left:286px;top:5px;color:#b85450">div.container</div>
<svg class="abs" style="left:365px;top:8px" width="5" height="8" viewBox="0 0 5 8"><path d="M.5.500l3.500 3.500-3.500 3.500" stroke="#6e7173" fill="none"/></svg>
<div class="t bc" style="left:379px;top:5px;color:#b559c4">div.row.mb-5</div>
<svg class="abs" style="left:460px;top:8px" width="5" height="8" viewBox="0 0 5 8"><path d="M.5.500l3.500 3.500-3.500 3.500" stroke="#6e7173" fill="none"/></svg>
<div class="t bc" style="left:474px;top:5px;color:#6a80b8">div.col-12</div>
<svg class="abs" style="left:536px;top:8px" width="5" height="8" viewBox="0 0 5 8"><path d="M.5.500l3.500 3.500-3.500 3.500" stroke="#6e7173" fill="none"/></svg>
<div class="t bc" style="left:550px;top:5px;color:#3d9a9e">div.card.w-100</div>
<svg class="abs" style="left:637px;top:8px" width="5" height="8" viewBox="0 0 5 8"><path d="M.5.500l3.500 3.500-3.500 3.500" stroke="#6e7173" fill="none"/></svg>
<div class="t bc" style="left:651px;top:5px;color:#4e9e48">div.card-inner</div>
<svg class="abs" style="left:735px;top:8px" width="5" height="8" viewBox="0 0 5 8"><path d="M.5.500l3.500 3.500-3.500 3.500" stroke="#6e7173" fill="none"/></svg>
<div class="t bc" style="left:749px;top:5px;color:#a6a84f">div.row</div>
<svg class="abs" style="left:798px;top:8px" width="5" height="8" viewBox="0 0 5 8"><path d="M.5.500l3.500 3.500-3.500 3.500" stroke="#6e7173" fill="none"/></svg>
<div class="t bc" style="left:812px;top:5px;color:#b85450">div.col-12.col-md-8</div>
<svg class="abs" style="left:927px;top:8px" width="5" height="8" viewBox="0 0 5 8"><path d="M.5.500l3.500 3.500-3.500 3.500" stroke="#6e7173" fill="none"/></svg>
<div class="t bc" style="left:941px;top:5px;color:#b559c4">div.card-inner.pt-3.pb-3.pr-3</div>
</div>
<div class="hl" style="top:996px;background:#323232"></div>
<svg class="abs" style="left:34px;top:1003px" width="11" height="10" viewBox="0 0 11 10"><path d="M0 1h2M0 5h2M0 9h2M3.500 1H11M3.500 5H11M3.500 9H11" stroke="#afb1b3" stroke-width="1.600"/></svg>
<div class="t" style="left:49px;top:1001px;font-size:11.500px;letter-spacing:-.35px"><u>6</u>: TODO</div>
<svg class="abs" style="left:116px;top:1002px" width="11" height="12" viewBox="0 0 11 12"><path d="M2 0v12" stroke="#afb1b3" stroke-width="1.800"/><path d="M2 9c4 0 5-1 5-5" stroke="#afb1b3" stroke-width="1.600" fill="none"/><path d="M4 4.500L7 1l3 3.500z" fill="#afb1b3"/></svg>
<div class="t" style="left:132px;top:1001px;font-size:11.800px"><u>9</u>: Version Control</div>
<svg class="abs" style="left:250px;top:1002px" width="12" height="11" viewBox="0 0 12 11"><rect width="12" height="11" fill="#afb1b3"/><path d="M2 2.500l2.500 2-2.500 2M6 7.500h4" stroke="#3c3f41" stroke-width="1.200" fill="none"/></svg>
<div class="t" style="left:265px;top:1001px;font-size:11.500px">Terminal</div>
<svg class="abs" style="left:1182px;top:1001px" width="14" height="14" viewBox="0 0 14 14"><path d="M13 7A6 6 0 1 0 7 13h6z" stroke="#afb1b3" stroke-width="1.500" fill="none"/></svg>
<div class="t" style="left:1200px;top:1001px;font-size:11.300px">Event Log</div>
<div class="hl" style="top:1018px;background:#4a4d4f"></div>
<svg class="abs" style="left:6px;top:1023px" width="12" height="12" viewBox="0 0 12 12"><path d="M2.500 3V.5h9v9H9" stroke="#afb1b3" fill="none"/><rect x=".5" y="2.500" width="9" height="9" stroke="#afb1b3" fill="none"/></svg>
<div class="t" style="left:956px;top:1021px;font-size:11.600px">81:73</div>
<div class="t" style="left:995px;top:1021px;font-size:11.600px">CRLF</div>
<div class="t" style="left:1035px;top:1021px;font-size:11.600px">UTF-8</div>
<div class="t" style="left:1078px;top:1021px;font-size:11.600px">4 spaces</div>
<div class="t" style="left:1137px;top:1021px;font-size:11.600px">Git: master</div>
<svg class="abs" style="left:1207px;top:1022px" width="13" height="13" viewBox="0 0 13 13"><rect x="3" y="6" width="9" height="6.500" fill="#afb1b3"/><path d="M1 6V3.500a2.500 2.500 0 0 1 5 0V6" stroke="#afb1b3" stroke-width="1.500" fill="none"/></svg>
<svg class="abs" style="left:1231px;top:1021px" width="14" height="15" viewBox="0 0 14 15"><path d="M3.500 1h7l.8 4.500H2.700z" fill="#afb1b3"/><rect x="0" y="5" width="14" height="1.600" fill="#afb1b3"/><circle cx="7" cy="9" r="3.200" fill="#afb1b3"/><path d="M1 14.500c1-3 11-3 12 0z" fill="#afb1b3"/><circle cx="5.700" cy="8.500" r=".7" fill="#3c3f41"/><circle cx="8.300" cy="8.500" r=".7" fill="#3c3f41"/></svg>
<svg class="abs" style="left:1255px;top:1021px" width="15" height="16" viewBox="0 0 15 16"><circle cx="5" cy="5" r="3.600" fill="#afb1b3"/><path d="M5 0v10M0 5h10M1.500 1.500l7 7M8.500 1.500l-7 7" stroke="#afb1b3" stroke-width="1.600"/><circle cx="5" cy="5" r="1.500" fill="#3c3f41"/><text x="8" y="15" font-size="10" font-weight="bold" fill="#afb1b3" font-family="Liberation Sans,sans-serif">?</text></svg>
<div class="hl" style="top:1039px;background:#5a5c5e"></div>
</div>
<div class="abs" style="left:2559px;top:0;width:1px;height:1040px;background:#55524a"></div><div id="taskbar" style="position:absolute;left:0;top:1039px;width:2560px;height:41px;background:#3b3428;overflow:hidden">
<div class="abs" style="left:637px;top:0;width:46px;height:41px;background:#5b564a"></div>
<div class="abs" style="left:683px;top:0;width:1px;height:40px;background:#4a453a"></div>
<div class="abs" style="left:151px;top:39px;width:40px;height:2px;background:#e6a3ee"></div>
<div class="abs" style="left:200px;top:39px;width:40px;height:2px;background:#e6a3ee"></div>
<div class="abs" style="left:298px;top:39px;width:40px;height:2px;background:#e6a3ee"></div>
<div class="abs" style="left:445px;top:39px;width:40px;height:2px;background:#e6a3ee"></div>
<div class="abs" style="left:592px;top:39px;width:40px;height:2px;background:#e6a3ee"></div>
<div class="abs" style="left:690px;top:39px;width:40px;height:2px;background:#e6a3ee"></div>
<div class="abs" style="left:886px;top:39px;width:40px;height:2px;background:#e6a3ee"></div>
<div class="abs" style="left:935px;top:39px;width:40px;height:2px;background:#e6a3ee"></div>
<div class="abs" style="left:984px;top:39px;width:40px;height:2px;background:#e6a3ee"></div>
<div class="abs" style="left:1033px;top:39px;width:40px;height:2px;background:#e6a3ee"></div>
<div class="abs" style="left:637px;top:39px;width:46px;height:2px;background:#e6a3ee"></div>
<div class="abs" style="left:232px;top:39px;width:8px;height:2px;background:#b87fc0"></div>
<svg class="abs" style="left:16px;top:13px" width="16" height="16" viewBox="0 0 16 16"><path d="M0 2.400l6.500-.9v6.300H0zM7.300 1.400L16 .2v7.600H7.300zM0 8.600h6.500v6.300L0 14zM7.300 8.600H16v7.600l-8.700-1.200z" fill="#fff"/></svg>
<svg class="abs" style="left:63px;top:12px" width="18" height="18" viewBox="0 0 18 18"><circle cx="10.500" cy="6.500" r="5" stroke="#fff" stroke-width="1.400" fill="none"/><path d="M7 10l-6 6.500" stroke="#fff" stroke-width="1.400"/></svg>
<svg class="abs" style="left:111px;top:14px" width="17" height="15" viewBox="0 0 17 15"><rect x="2" y="3.500" width="9" height="7" stroke="#fff" stroke-width="1.200" fill="none"/><path d="M1 1h11M1 13h11M1 0v2.500M12 0v2.500M1 11.500V15M12 11.500V15M15 0v3M15 6v8" stroke="#fff" stroke-width="1.200"/><rect x="14" y="3.500" width="2" height="2" fill="#fff"/></svg>
<svg class="abs" style="left:158px;top:9px" width="24" height="24" viewBox="0 0 24 24"><path d="M1 3h7l2 2h13v16H1z" fill="#f7d36b"/><path d="M1 7h22v14H1z" fill="#fbe18e"/><path d="M6 21v-7h12v7h-3v-4H9v4z" fill="#3aa0e8"/><rect x="3" y="4" width="4" height="1.200" fill="#3aa0e8"/></svg>
<svg class="abs" style="left:207px;top:9px" width="24" height="24" viewBox="0 0 24 24"><circle cx="12" cy="12" r="11" fill="#dd4b3e"/><path d="M12 12L2.500 17.500A11 11 0 0 0 13 23l5-9z" fill="#1ba260"/><path d="M12 12h11a11 11 0 0 1-10 11l5.500-9.500z" fill="#ffce43"/><path d="M12 12l9.500-5.500" stroke="#dd4b3e" stroke-width="0"/><circle cx="12" cy="12" r="5" fill="#fff"/><circle cx="12" cy="12" r="4" fill="#4a8af4"/></svg>
<svg class="abs" style="left:256px;top:9px" width="24" height="24" viewBox="0 0 24 24"><rect x="8" y="2" width="14" height="13" fill="#1b7fd6"/><rect x="15" y="2" width="7" height="6.500" fill="#35a8f0"/><path d="M8 12l14 0v9H10z" fill="#0f5fb0"/><path d="M10 21l12-9v9z" fill="#1a8be0"/><rect x="1" y="6" width="12" height="12" rx="1" fill="#0a64c0"/><circle cx="7" cy="12" r="3" stroke="#fff" stroke-width="1.600" fill="none"/></svg>
<svg class="abs" style="left:305px;top:9px" width="24" height="25" viewBox="0 0 24 25"><circle cx="15" cy="4.500" r="3.200" fill="#5b62c9"/><circle cx="21" cy="6" r="2" fill="#4a52bd"/><path d="M10 9h10v8a5 5 0 0 1-10 0z" fill="#5b62c9"/><path d="M19 9h5v6a3 3 0 0 1-5 2z" fill="#4a52bd"/><rect x="1" y="5" width="12" height="12" rx="1" fill="#4b53bc"/><path d="M4 8.500h6M7 8.500v6" stroke="#fff" stroke-width="1.800"/><circle cx="19" cy="20" r="4" fill="#7bc043" stroke="#fff" stroke-width=".8"/><path d="M17 20l1.500 1.500 2.500-3" stroke="#fff" stroke-width="1.200" fill="none"/></svg>
<svg class="abs" style="left:355px;top:9px" width="24" height="24" viewBox="0 0 24 24"><path d="M12 0l12 12-12 12L0 12z" fill="#4db382" stroke="#4db382" stroke-width="1" stroke-linejoin="round"/><path d="M12 4l8 8-8 8-8-8z" fill="none" stroke="#d8f0e4" stroke-width="1.200"/><path d="M12 7.500l4.500 4.500-4.500 4.500L7.500 12z" fill="none" stroke="#d8f0e4" stroke-width="1"/><path d="M10 12h4" stroke="#d8f0e4"/></svg>
<svg class="abs" style="left:405px;top:10px" width="22" height="22" viewBox="0 0 22 22"><circle cx="11" cy="11" r="11" fill="#0a5bd6"/><circle cx="11" cy="9.500" r="4" fill="#fff"/><rect x="9.800" y="10" width="2.400" height="8" fill="#fff"/><circle cx="11" cy="9.500" r="1.500" fill="#0a5bd6"/></svg>
<svg class="abs" style="left:454px;top:10px" width="23" height="23" viewBox="0 0 23 23"><circle cx="11.500" cy="11.500" r="11.500" fill="#f4f1ee"/><g stroke-width="2.600" stroke-linecap="round"><path d="M9.500 5.500v5" stroke="#36c5f0"/><path d="M5.500 9.500h1" stroke="#36c5f0"/><path d="M12.500 9.500h5" stroke="#2eb67d"/><path d="M13.500 5.500v1" stroke="#2eb67d"/><path d="M13.500 12.500v5" stroke="#ecb22e"/><path d="M16.500 13.500h1" stroke="#ecb22e"/><path d="M5.500 13.500h5" stroke="#e01e5a"/><path d="M9.500 16.500v1" stroke="#e01e5a"/></g></svg>
<svg class="abs" style="left:503px;top:10px" width="23" height="23" viewBox="0 0 23 23"><g transform="rotate(-45 11.500 11.500)"><circle cx="11.500" cy="11.500" r="11" fill="#e9452f"/><path d="M11.500.5a11 11 0 0 1 11 11h-6a5 5 0 0 0-5-5z" fill="#1e6fe8"/><path d="M22.500 11.500a11 11 0 0 1-11 11v-6a5 5 0 0 0 5-5z" fill="#30a64a"/><path d="M11.500 22.500a11 11 0 0 1-9-4.500l5-3.500a5 5 0 0 0 4 2z" fill="#f6c21c"/><circle cx="11.500" cy="11.500" r="4" fill="#3b3428"/></g></svg>
<svg class="abs" style="left:550px;top:9px" width="24" height="24" viewBox="0 0 24 24"><rect x="2" y="2" width="6" height="5" fill="#2a7be0"/><path d="M6 12V9a4 4 0 0 1 8 0v3" stroke="#9a9a9a" stroke-width="2" fill="none"/><rect x="4" y="11" width="12" height="9" rx="1" fill="#8c8c8c"/><path d="M14 14l7 7M21 15v6h-6" stroke="#2fbf3a" stroke-width="2.600" fill="none"/></svg>
<svg class="abs" style="left:599px;top:9px" width="24" height="24" viewBox="0 0 24 24"><circle cx="12" cy="12" r="12" fill="#1ed760"/><path d="M5.500 8.500c4.500-1.500 9.500-1 13.500 1.200M6.500 12.300c3.800-1.100 7.800-.7 11 1.200M7.300 15.800c3-.8 6-.5 8.500 1" stroke="#1a1a1a" stroke-width="2" fill="none" stroke-linecap="round"/></svg>
<svg class="abs" style="left:648px;top:9px" width="24" height="24" viewBox="0 0 24 24"><path d="M1 6L9 0l14 3 1 12-9 9L2 21z" fill="#b24bf0"/><path d="M14 1l10 8-3 12-8 2z" fill="#7a5cf0"/><path d="M0 8l6-6 8 20-10 0z" fill="#e2469a"/><rect x="4.500" y="4.500" width="15" height="15" fill="#000"/><text x="6" y="12" font-size="7.500" font-weight="bold" fill="#fff" font-family="Liberation Sans,sans-serif">PS</text><rect x="6" y="15.500" width="5.500" height="1.300" fill="#fff"/></svg>
<svg class="abs" style="left:697px;top:9px" width="24" height="24" viewBox="0 0 24 24"><path d="M1 6L9 0l14 3 1 12-9 9L2 21z" fill="#21d789"/><path d="M14 1l10 8-3 12-8 2z" fill="#9775f8"/><path d="M0 8l6-6 8 20-10 0z" fill="#22b1c9"/><rect x="4.500" y="4.500" width="15" height="15" fill="#000"/><text x="6" y="12" font-size="7.500" font-weight="bold" fill="#fff" font-family="Liberation Sans,sans-serif">DG</text><rect x="6" y="15.500" width="5.500" height="1.300" fill="#fff"/></svg>
<svg class="abs" style="left:746px;top:9px" width="24" height="24" viewBox="0 0 24 24"><path d="M1 6L9 0l14 3 1 12-9 9L2 21z" fill="#fe315d"/><path d="M14 1l10 8-3 12-8 2z" fill="#087cfa"/><path d="M0 8l6-6 8 20-10 0z" fill="#fc801d"/><rect x="4.500" y="4.500" width="15" height="15" fill="#000"/><text x="6" y="12" font-size="7.500" font-weight="bold" fill="#fff" font-family="Liberation Sans,sans-serif">IJ</text><rect x="6" y="15.500" width="5.500" height="1.300" fill="#fff"/></svg>
<svg class="abs" style="left:796px;top:9px" width="24" height="24" viewBox="0 0 24 24"><path d="M17 1l6 3v16l-6 3L6 13l-4 3-2-1.500V8.500L2 7l4 3zM17 7l-6 5 6 5z" fill="#2489ca"/><path d="M17 1l6 3v16l-6 3z" fill="#1070b3"/></svg>
<svg class="abs" style="left:845px;top:9px" width="24" height="24" viewBox="0 0 24 24"><rect x="0" y="1" width="24" height="18" rx="1" fill="#0d3a4a" stroke="#1a5a70"/><path d="M18 6H8v8h10M8 10h8" stroke="#fff" stroke-width="1.800" fill="none"/><rect x="8" y="21" width="8" height="1.500" fill="#1a5a70"/></svg>
<svg class="abs" style="left:894px;top:9px" width="24" height="24" viewBox="0 0 24 24"><rect x="0" y="0" width="24" height="24" rx="4" fill="#f37a20"/><path d="M6 5c2 0 3 1 6 1s4-1 6-1c2 0 2 3 0 4-1 .5-1 5.500 0 6 2 1 2 4 0 4s-3-1-6-1-4 1-6 1-2-3 0-4c1-.5 1-5.500 0-6-2-1-2-4 0-4z" fill="#fff"/><path d="M9 9l6 6M15 9l-6 6" stroke="#f37a20" stroke-width="2.500"/></svg>
<svg class="abs" style="left:943px;top:9px" width="24" height="24" viewBox="0 0 24 24"><path d="M6 2h14l-2 18H3z" fill="#cfe9f5"/><path d="M6 2h14l-.4 4H5.500z" fill="#8fc4de"/><path d="M7 9h10M6.500 12h10M6 15h10" stroke="#9bb8c6" stroke-width=".8"/><path d="M18 20l2-18 1.500 1-2 17.500z" fill="#c9a35a"/></svg>
<svg class="abs" style="left:992px;top:9px" width="24" height="24" viewBox="0 0 24 24"><rect x="8" y="1" width="15" height="22" rx="1" fill="#1d9d5a"/><rect x="15" y="1" width="8" height="7" fill="#33c481"/><rect x="15" y="15" width="8" height="8" fill="#107c41"/><rect x="8" y="8" width="7" height="7" fill="#185c37"/><rect x="1" y="6" width="12" height="12" rx="1" fill="#107c41"/><path d="M4.500 8.500l5 7M9.500 8.500l-5 7" stroke="#fff" stroke-width="1.700"/></svg>
<svg class="abs" style="left:1042px;top:10px" width="23" height="23" viewBox="0 0 23 23"><rect x="0" y="0" width="23" height="23" fill="#b30000"/><text x="2" y="18" font-size="17" font-weight="bold" font-style="italic" fill="#fff" font-family="Liberation Sans,sans-serif">Fz</text></svg>
<svg class="abs" style="left:2303px;top:16px" width="14" height="10" viewBox="0 0 14 10"><path d="M1 8l6-6 6 6" stroke="#fff" stroke-width="1.300" fill="none"/></svg>
<svg class="abs" style="left:2326px;top:14px" width="18" height="14" viewBox="0 0 18 14"><path d="M4 13a4 4 0 0 1 .5-8 5.500 5.500 0 0 1 10-1 4.500 4.500 0 0 1 1 9z" fill="#1a8fe3"/><path d="M2 13c2-4 8-5 14-2 0 1-1 2-2 2z" fill="#37a4f0"/></svg>
<svg class="abs" style="left:2351px;top:14px" width="16" height="15" viewBox="0 0 16 15"><rect x="4" y="1" width="11" height="9" fill="#7be07b" stroke="#fff" stroke-width="1.400"/><path d="M9.500 10v3M6 13.500h7" stroke="#fff" stroke-width="1.400"/><rect x="0" y="5" width="5" height="4" fill="#fff"/><path d="M1 5V3.500a1.500 1.500 0 0 1 3 0V5" stroke="#fff" fill="none"/></svg>
<svg class="abs" style="left:2376px;top:14px" width="15" height="15" viewBox="0 0 23 23"><g transform="rotate(-45 11.500 11.500)"><circle cx="11.500" cy="11.500" r="11" fill="#e9452f"/><path d="M11.500.5a11 11 0 0 1 11 11h-6a5 5 0 0 0-5-5z" fill="#1e6fe8"/><path d="M22.500 11.500a11 11 0 0 1-11 11v-6a5 5 0 0 0 5-5z" fill="#30a64a"/><path d="M11.500 22.500a11 11 0 0 1-9-4.500l5-3.500a5 5 0 0 0 4 2z" fill="#f6c21c"/><circle cx="11.500" cy="11.500" r="4" fill="#3b3428"/></g></svg>
<svg class="abs" style="left:2399px;top:14px" width="17" height="15" viewBox="0 0 17 15"><rect x="4" y="1" width="12" height="9" fill="none" stroke="#fff" stroke-width="1.200"/><path d="M10 10v3M6 13.500h8M2 1v13M0 1h4" stroke="#fff" stroke-width="1.200"/><rect x="1" y="2" width="3" height="2.500" fill="none" stroke="#fff" stroke-width=".8"/></svg>
<svg class="abs" style="left:2423px;top:14px" width="16" height="14" viewBox="0 0 16 14"><path d="M1 5h3l4-4v12l-4-4H1z" stroke="#fff" stroke-width="1.100" fill="none"/><path d="M10.500 5l4 4M14.500 5l-4 4" stroke="#fff" stroke-width="1.200"/></svg>
<div class="abs" style="left:2440px;top:4px;width:70px;text-align:center;color:#fff;font-size:11.500px;letter-spacing:-.1px;line-height:16px">14:47</div>
<div class="abs" style="left:2440px;top:21px;width:70px;text-align:center;color:#fff;font-size:11.500px;letter-spacing:-.1px;line-height:16px">31-10-2019</div>
<svg class="abs" style="left:2517px;top:13px" width="16" height="16" viewBox="0 0 16 16"><path d="M0 0h16v12H6l-3 3.500V12H0z" fill="#fff"/><path d="M3 3.500h10M3 6h10M3 8.500h10" stroke="#3b3428" stroke-width=".9"/></svg>
<div class="abs" style="left:2526px;top:20px;width:17px;height:17px;border-radius:9px;background:#3b3428;border:1px solid #777;color:#fff;font-size:11px;line-height:15px;text-align:center">8</div>
<div class="abs" style="left:2554px;top:0;width:1px;height:40px;background:#6a6558"></div>
</div>
</body>
</html>
